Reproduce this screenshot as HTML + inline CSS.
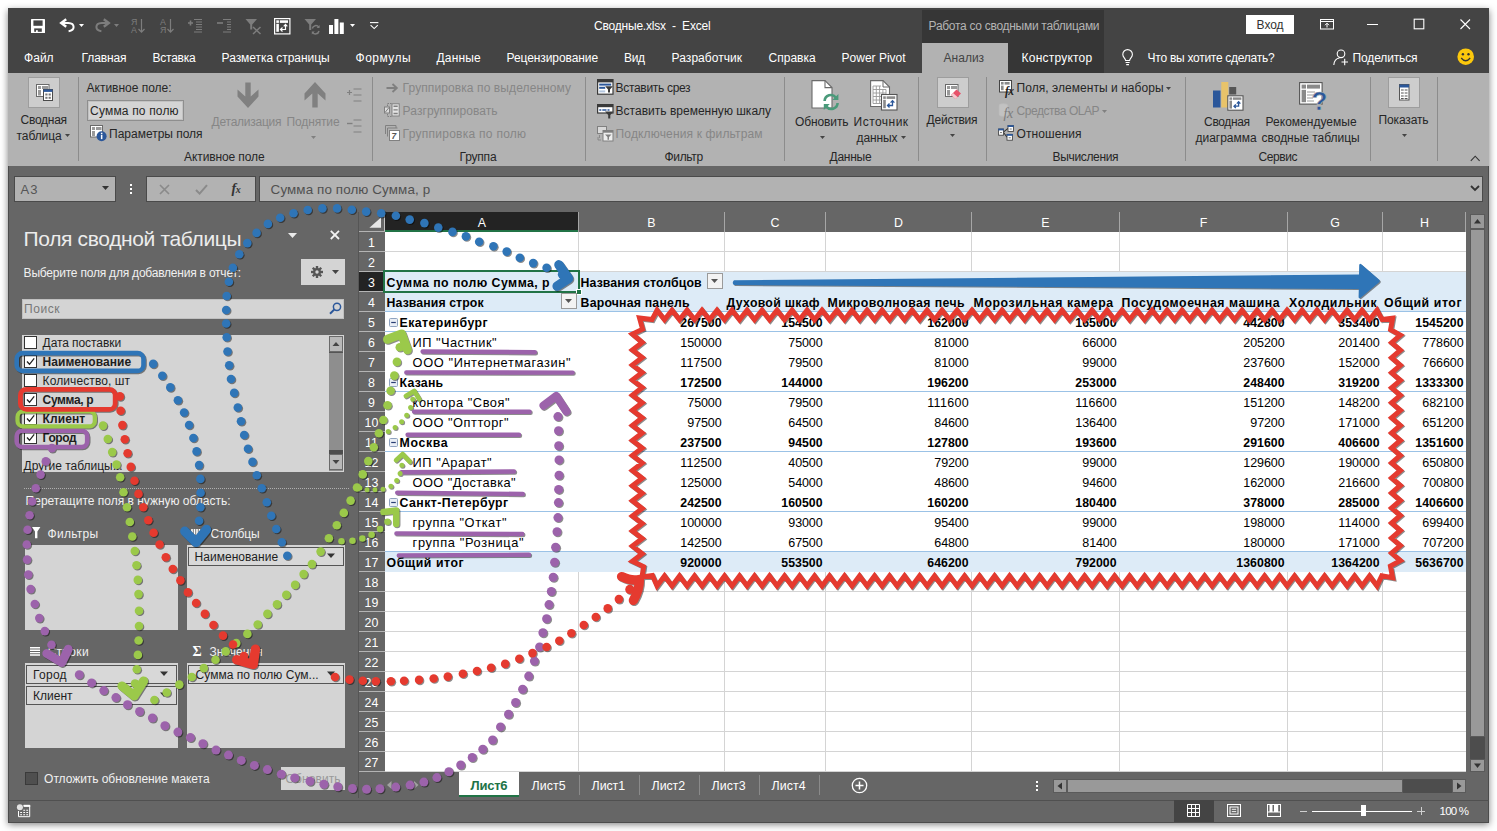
<!DOCTYPE html>
<html><head><meta charset="utf-8"><title>Excel</title>
<style>
html,body{margin:0;padding:0;background:#fff;}
body{width:1497px;height:831px;position:relative;overflow:hidden;font-family:"Liberation Sans",sans-serif;}
.a{position:absolute;box-sizing:border-box;}
.t{position:absolute;white-space:pre;}
svg{position:absolute;overflow:visible;}
</style></head><body>
<div class="a" style="left:8px;top:8px;width:1481px;height:815px;background:#666666;border:1px solid #4c4c4c;box-shadow:0 1.5px 7px rgba(0,0,0,.5);"></div>
<div class="a" style="left:8px;top:8px;width:1481px;height:65px;background:#444444;"></div>
<div class="a" style="left:922px;top:10px;width:182px;height:63px;background:#363636;"></div>
<span class="t " style="top:18.00px;font-size:12px;line-height:16px;color:#b4b4b4;letter-spacing:-0.291px;left:928.60px;">Работа со сводными таблицами</span>
<div class="a" style="left:922px;top:43px;width:86px;height:30px;background:#b2b2b2;"></div>
<span class="t " style="top:18.00px;font-size:12px;line-height:16px;color:#ffffff;letter-spacing:-0.211px;left:594.10px;">Сводные.xlsx  -  Excel</span>
<div class="a" style="left:1246px;top:15px;width:48px;height:19px;background:#ffffff;"></div>
<span class="t " style="top:17.00px;font-size:12px;line-height:16px;color:#333333;letter-spacing:-0.052px;left:1256.60px;">Вход</span>
<span class="t " style="top:50.00px;font-size:12px;line-height:16px;color:#ffffff;letter-spacing:-0.005px;left:24.10px;">Файл</span>
<span class="t " style="top:50.00px;font-size:12px;line-height:16px;color:#ffffff;letter-spacing:-0.115px;left:81.60px;">Главная</span>
<span class="t " style="top:50.00px;font-size:12px;line-height:16px;color:#ffffff;letter-spacing:-0.268px;left:152.60px;">Вставка</span>
<span class="t " style="top:50.00px;font-size:12px;line-height:16px;color:#ffffff;letter-spacing:-0.055px;left:221.60px;">Разметка страницы</span>
<span class="t " style="top:50.00px;font-size:12px;line-height:16px;color:#ffffff;letter-spacing:0.464px;left:355.60px;">Формулы</span>
<span class="t " style="top:50.00px;font-size:12px;line-height:16px;color:#ffffff;letter-spacing:0.128px;left:436.60px;">Данные</span>
<span class="t " style="top:50.00px;font-size:12px;line-height:16px;color:#ffffff;letter-spacing:-0.090px;left:506.60px;">Рецензирование</span>
<span class="t " style="top:50.00px;font-size:12px;line-height:16px;color:#ffffff;letter-spacing:-0.359px;left:624.10px;">Вид</span>
<span class="t " style="top:50.00px;font-size:12px;line-height:16px;color:#ffffff;letter-spacing:0.052px;left:671.60px;">Разработчик</span>
<span class="t " style="top:50.00px;font-size:12px;line-height:16px;color:#ffffff;letter-spacing:-0.013px;left:768.60px;">Справка</span>
<span class="t " style="top:50.00px;font-size:12px;line-height:16px;color:#ffffff;letter-spacing:-0.003px;left:841.60px;">Power Pivot</span>
<span class="t " style="top:50.00px;font-size:12px;line-height:16px;color:#ffffff;letter-spacing:0.208px;left:1021.60px;">Конструктор</span>
<span class="t " style="top:50.00px;font-size:12px;line-height:16px;color:#ffffff;letter-spacing:-0.269px;left:1147.60px;">Что вы хотите сделать?</span>
<span class="t " style="top:50.00px;font-size:12px;line-height:16px;color:#ffffff;letter-spacing:-0.141px;left:1352.60px;">Поделиться</span>
<span class="t " style="top:50.00px;font-size:12px;line-height:16px;color:#444444;letter-spacing:-0.003px;left:943.60px;">Анализ</span>
<div class="a" style="left:8px;top:73px;width:1481px;height:93px;background:#b2b2b2;"></div>
<div class="a" style="left:78px;top:77px;width:1px;height:84px;background:#8c8c8c;"></div>
<div class="a" style="left:372px;top:77px;width:1px;height:84px;background:#8c8c8c;"></div>
<div class="a" style="left:585px;top:77px;width:1px;height:84px;background:#8c8c8c;"></div>
<div class="a" style="left:784px;top:77px;width:1px;height:84px;background:#8c8c8c;"></div>
<div class="a" style="left:918px;top:77px;width:1px;height:84px;background:#8c8c8c;"></div>
<div class="a" style="left:986px;top:77px;width:1px;height:84px;background:#8c8c8c;"></div>
<div class="a" style="left:1185px;top:77px;width:1px;height:84px;background:#8c8c8c;"></div>
<div class="a" style="left:1370px;top:77px;width:1px;height:84px;background:#8c8c8c;"></div>
<div class="a" style="left:1437px;top:77px;width:1px;height:84px;background:#8c8c8c;"></div>
<div class="a" style="left:28px;top:77px;width:32px;height:31px;background:#cdcdcd;border:1px solid #9d9d9d;"></div>
<span class="t " style="top:112.00px;font-size:12px;line-height:16px;color:#262626;letter-spacing:-0.271px;left:20.60px;">Сводная</span>
<span class="t " style="top:128.00px;font-size:12px;line-height:16px;color:#262626;letter-spacing:-0.104px;left:16.60px;">таблица</span>
<span class="t " style="top:80.00px;font-size:12px;line-height:16px;color:#262626;letter-spacing:-0.016px;left:86.60px;">Активное поле:</span>
<div class="a" style="left:87px;top:100px;width:97px;height:21px;background:#d4d4d4;border:1px solid #8e8e8e;box-shadow:inset 0 0 0 1px #c2c2c2;"></div>
<span class="t " style="top:103.00px;font-size:12px;line-height:16px;color:#262626;letter-spacing:0.169px;left:90.10px;">Сумма по полю</span>
<span class="t " style="top:126.00px;font-size:12px;line-height:16px;color:#262626;letter-spacing:-0.017px;left:109.10px;">Параметры поля</span>
<span class="t " style="top:114.00px;font-size:12px;line-height:16px;color:#868686;letter-spacing:-0.241px;left:211.60px;">Детализация</span>
<span class="t " style="top:114.00px;font-size:12px;line-height:16px;color:#868686;letter-spacing:-0.150px;left:286.60px;">Поднятие</span>
<span class="t " style="top:149.00px;font-size:12px;line-height:16px;color:#262626;letter-spacing:-0.113px;left:184.10px;">Активное поле</span>
<span class="t " style="top:80.00px;font-size:12px;line-height:16px;color:#868686;letter-spacing:0.097px;left:402.60px;">Группировка по выделенному</span>
<span class="t " style="top:103.00px;font-size:12px;line-height:16px;color:#868686;letter-spacing:0.070px;left:402.60px;">Разгруппировать</span>
<span class="t " style="top:126.00px;font-size:12px;line-height:16px;color:#868686;letter-spacing:0.265px;left:402.60px;">Группировка по полю</span>
<span class="t " style="top:149.00px;font-size:12px;line-height:16px;color:#262626;letter-spacing:-0.209px;left:459.60px;">Группа</span>
<span class="t " style="top:80.00px;font-size:12px;line-height:16px;color:#262626;letter-spacing:-0.316px;left:615.60px;">Вставить срез</span>
<span class="t " style="top:103.00px;font-size:12px;line-height:16px;color:#262626;letter-spacing:0.011px;left:615.60px;">Вставить временную шкалу</span>
<span class="t " style="top:126.00px;font-size:12px;line-height:16px;color:#868686;letter-spacing:0.151px;left:615.60px;">Подключения к фильтрам</span>
<span class="t " style="top:149.00px;font-size:12px;line-height:16px;color:#262626;letter-spacing:-0.362px;left:664.60px;">Фильтр</span>
<span class="t " style="top:114.00px;font-size:12px;line-height:16px;color:#262626;letter-spacing:-0.121px;left:795.10px;">Обновить</span>
<span class="t " style="top:114.00px;font-size:12px;line-height:16px;color:#262626;letter-spacing:0.467px;left:853.60px;">Источник</span>
<span class="t " style="top:130.00px;font-size:12px;line-height:16px;color:#262626;letter-spacing:-0.113px;left:856.60px;">данных</span>
<span class="t " style="top:149.00px;font-size:12px;line-height:16px;color:#262626;letter-spacing:-0.272px;left:829.60px;">Данные</span>
<div class="a" style="left:937px;top:77px;width:32px;height:31px;background:#cdcdcd;border:1px solid #9d9d9d;"></div>
<span class="t " style="top:112.00px;font-size:12px;line-height:16px;color:#262626;letter-spacing:-0.225px;left:926.60px;">Действия</span>
<span class="t " style="top:80.00px;font-size:12px;line-height:16px;color:#262626;letter-spacing:0.048px;left:1016.60px;">Поля, элементы и наборы</span>
<span class="t " style="top:103.00px;font-size:12px;line-height:16px;color:#868686;letter-spacing:-0.460px;left:1016.60px;">Средства OLAP</span>
<span class="t " style="top:126.00px;font-size:12px;line-height:16px;color:#262626;letter-spacing:0.092px;left:1016.60px;">Отношения</span>
<span class="t " style="top:149.00px;font-size:12px;line-height:16px;color:#262626;letter-spacing:-0.344px;left:1052.60px;">Вычисления</span>
<span class="t " style="top:114.00px;font-size:12px;line-height:16px;color:#262626;letter-spacing:-0.354px;left:1204.10px;">Сводная</span>
<span class="t " style="top:130.00px;font-size:12px;line-height:16px;color:#262626;letter-spacing:-0.035px;left:1195.60px;">диаграмма</span>
<span class="t " style="top:114.00px;font-size:12px;line-height:16px;color:#262626;letter-spacing:0.012px;left:1265.60px;">Рекомендуемые</span>
<span class="t " style="top:130.00px;font-size:12px;line-height:16px;color:#262626;letter-spacing:-0.035px;left:1261.60px;">сводные таблицы</span>
<span class="t " style="top:149.00px;font-size:12px;line-height:16px;color:#262626;letter-spacing:-0.419px;left:1258.60px;">Сервис</span>
<div class="a" style="left:1388px;top:77px;width:32px;height:31px;background:#cdcdcd;border:1px solid #9d9d9d;"></div>
<span class="t " style="top:112.00px;font-size:12px;line-height:16px;color:#262626;letter-spacing:-0.145px;left:1378.60px;">Показать</span>
<div class="a" style="left:14px;top:176px;width:102px;height:26px;background:#b2b2b2;border:1px solid #4a4a4a;"></div>
<span class="t " style="top:181.00px;font-size:13px;line-height:17px;color:#555555;letter-spacing:1.094px;left:20.60px;">A3</span>
<div class="a" style="left:146px;top:176px;width:110px;height:26px;background:#b2b2b2;border:1px solid #4a4a4a;"></div>
<div class="a" style="left:259px;top:176px;width:1224px;height:26px;background:#b2b2b2;border:1px solid #4a4a4a;"></div>
<span class="t " style="top:181.00px;font-size:13.4px;line-height:17px;color:#505050;letter-spacing:0.111px;left:270.60px;">Сумма по полю Сумма, р</span>
<span class="t " style="top:226.00px;font-size:21px;line-height:25px;color:#ececec;letter-spacing:-0.356px;left:23.60px;">Поля сводной таблицы</span>
<span class="t " style="top:265.00px;font-size:12px;line-height:16px;color:#f0f0f0;letter-spacing:-0.215px;left:23.60px;">Выберите поля для добавления в отчет:</span>
<div class="a" style="left:301px;top:259px;width:44px;height:26px;background:#d4d4d4;"></div>
<div class="a" style="left:22px;top:299px;width:322px;height:20px;background:#d4d4d4;border:1px solid #c0c0c0;"></div>
<span class="t " style="top:301.00px;font-size:12px;line-height:16px;color:#777777;letter-spacing:0.559px;left:24.10px;">Поиск</span>
<div class="a" style="left:22px;top:335px;width:322px;height:137px;background:#d4d4d4;"></div>
<div class="a" style="left:24px;top:336.0px;width:13px;height:13px;background:#ffffff;border:1px solid #333333;"></div>
<span class="t " style="top:335.00px;font-size:12px;line-height:16px;color:#1e1e1e;letter-spacing:-0.079px;left:42.60px;">Дата поставки</span>
<div class="a" style="left:24px;top:355.0px;width:13px;height:13px;background:#ffffff;border:1px solid #333333;"></div>
<svg style="left:24px;top:355.0px" width="13" height="13"><path d="M3 6.5 L5.5 9.3 L10.2 3.3" fill="none" stroke="#222" stroke-width="1.3"/></svg>
<span class="t " style="top:354.00px;font-size:12px;line-height:16px;color:#1e1e1e;font-weight:bold;letter-spacing:0.041px;left:42.60px;">Наименование</span>
<div class="a" style="left:24px;top:374.0px;width:13px;height:13px;background:#ffffff;border:1px solid #333333;"></div>
<span class="t " style="top:373.00px;font-size:12px;line-height:16px;color:#1e1e1e;letter-spacing:0.097px;left:42.60px;">Количество, шт</span>
<div class="a" style="left:24px;top:393.0px;width:13px;height:13px;background:#ffffff;border:1px solid #333333;"></div>
<svg style="left:24px;top:393.0px" width="13" height="13"><path d="M3 6.5 L5.5 9.3 L10.2 3.3" fill="none" stroke="#222" stroke-width="1.3"/></svg>
<span class="t " style="top:392.00px;font-size:12px;line-height:16px;color:#1e1e1e;font-weight:bold;letter-spacing:-0.350px;left:42.60px;">Сумма, р</span>
<div class="a" style="left:24px;top:412.0px;width:13px;height:13px;background:#ffffff;border:1px solid #333333;"></div>
<svg style="left:24px;top:412.0px" width="13" height="13"><path d="M3 6.5 L5.5 9.3 L10.2 3.3" fill="none" stroke="#222" stroke-width="1.3"/></svg>
<span class="t " style="top:411.00px;font-size:12px;line-height:16px;color:#1e1e1e;font-weight:bold;letter-spacing:0.075px;left:42.60px;">Клиент</span>
<div class="a" style="left:24px;top:431.0px;width:13px;height:13px;background:#ffffff;border:1px solid #333333;"></div>
<svg style="left:24px;top:431.0px" width="13" height="13"><path d="M3 6.5 L5.5 9.3 L10.2 3.3" fill="none" stroke="#222" stroke-width="1.3"/></svg>
<span class="t " style="top:430.00px;font-size:12px;line-height:16px;color:#1e1e1e;font-weight:bold;letter-spacing:-0.414px;left:42.60px;">Город</span>
<span class="t " style="top:458.00px;font-size:12px;line-height:16px;color:#1e1e1e;letter-spacing:-0.021px;left:23.60px;">Другие таблицы...</span>
<div class="a" style="left:329px;top:336px;width:14px;height:135px;background:#8e8e8e;"></div>
<div class="a" style="left:329px;top:336px;width:14px;height:16px;background:#b8b8b8;border:1px solid #6a6a6a;"></div>
<div class="a" style="left:329px;top:454px;width:14px;height:16px;background:#b8b8b8;border:1px solid #6a6a6a;"></div>
<div class="a" style="left:329px;top:352px;width:14px;height:1px;background:#555;"></div>
<div class="a" style="left:329px;top:450px;width:14px;height:4px;background:#4d4d4d;"></div>
<svg style="left:329px;top:336px" width="14" height="16"><path d="M3.5 10 L7 6 L10.5 10 Z" fill="#444"/></svg>
<svg style="left:329px;top:454px" width="14" height="16"><path d="M3.5 6 L7 10 L10.5 6 Z" fill="#444"/></svg>
<div class="a" style="left:24px;top:488px;width:325px;height:0px;border-top:1px dotted #b0b0b0;"></div>
<span class="t " style="top:493.00px;font-size:12px;line-height:16px;color:#f0f0f0;letter-spacing:-0.006px;left:25.60px;">Перетащите поля в нужную область:</span>
<span class="t " style="top:526.00px;font-size:12px;line-height:16px;color:#f0f0f0;letter-spacing:0.260px;left:47.60px;">Фильтры</span>
<span class="t " style="top:526.00px;font-size:12px;line-height:16px;color:#f0f0f0;letter-spacing:-0.135px;left:210.60px;">Столбцы</span>
<span class="t " style="top:644.00px;font-size:12px;line-height:16px;color:#f0f0f0;letter-spacing:0.306px;left:47.60px;">Строки</span>
<span class="t " style="top:644.00px;font-size:12px;line-height:16px;color:#f0f0f0;letter-spacing:-0.007px;left:209.60px;">Значения</span>
<div class="a" style="left:25px;top:545px;width:153px;height:85px;background:#d4d4d4;"></div>
<div class="a" style="left:187px;top:545px;width:158px;height:85px;background:#d4d4d4;"></div>
<div class="a" style="left:25px;top:663px;width:153px;height:85px;background:#d4d4d4;"></div>
<div class="a" style="left:187px;top:663px;width:158px;height:85px;background:#d4d4d4;"></div>
<div class="a" style="left:188px;top:547px;width:156px;height:19px;background:#d8d8d8;border:1px solid #555555;"></div>
<span class="t " style="top:549.00px;font-size:12px;line-height:16px;color:#1e1e1e;letter-spacing:0.028px;left:194.60px;">Наименование</span>
<svg style="left:327px;top:553px" width="9" height="6"><path d="M0 0.5 H8 L4 5 Z" fill="#333"/></svg>
<div class="a" style="left:26px;top:665px;width:151px;height:19px;background:#d8d8d8;border:1px solid #555555;"></div>
<span class="t " style="top:667.00px;font-size:12px;line-height:16px;color:#1e1e1e;letter-spacing:0.258px;left:33.10px;">Город</span>
<svg style="left:160px;top:671px" width="9" height="6"><path d="M0 0.5 H8 L4 5 Z" fill="#333"/></svg>
<div class="a" style="left:26px;top:686px;width:151px;height:19px;background:#d8d8d8;border:1px solid #555555;"></div>
<span class="t " style="top:688.00px;font-size:12px;line-height:16px;color:#1e1e1e;letter-spacing:0.000px;left:33.10px;">Клиент</span>
<svg style="left:160px;top:692px" width="9" height="6"><path d="M0 0.5 H8 L4 5 Z" fill="#333"/></svg>
<div class="a" style="left:188px;top:665px;width:156px;height:19px;background:#d8d8d8;border:1px solid #555555;"></div>
<span class="t " style="top:667.00px;font-size:12px;line-height:16px;color:#1e1e1e;letter-spacing:0.022px;left:195.60px;">Сумма по полю Сум...</span>
<svg style="left:327px;top:671px" width="9" height="6"><path d="M0 0.5 H8 L4 5 Z" fill="#333"/></svg>
<div class="a" style="left:25px;top:772px;width:13px;height:13px;background:#4f4f4f;border:1px solid #3a3a3a;"></div>
<span class="t " style="top:771.00px;font-size:12px;line-height:16px;color:#f0f0f0;letter-spacing:-0.046px;left:44.10px;">Отложить обновление макета</span>
<div class="a" style="left:281px;top:767px;width:64px;height:23px;background:#d4d4d4;"></div>
<span class="t " style="top:771.00px;font-size:12px;line-height:16px;color:#9a9a9a;letter-spacing:0.094px;left:285.60px;">Обновить</span>
<div class="a" style="left:358px;top:212px;width:1px;height:586px;background:#555555;"></div>
<div class="a" style="left:385px;top:232px;width:1081px;height:540px;background:#ffffff;"></div>
<div class="a" style="left:385px;top:251px;width:1081px;height:1px;background:#d4d4d4;"></div>
<div class="a" style="left:385px;top:271px;width:1081px;height:1px;background:#d4d4d4;"></div>
<div class="a" style="left:385px;top:591px;width:1081px;height:1px;background:#d4d4d4;"></div>
<div class="a" style="left:385px;top:611px;width:1081px;height:1px;background:#d4d4d4;"></div>
<div class="a" style="left:385px;top:631px;width:1081px;height:1px;background:#d4d4d4;"></div>
<div class="a" style="left:385px;top:651px;width:1081px;height:1px;background:#d4d4d4;"></div>
<div class="a" style="left:385px;top:671px;width:1081px;height:1px;background:#d4d4d4;"></div>
<div class="a" style="left:385px;top:691px;width:1081px;height:1px;background:#d4d4d4;"></div>
<div class="a" style="left:385px;top:711px;width:1081px;height:1px;background:#d4d4d4;"></div>
<div class="a" style="left:385px;top:731px;width:1081px;height:1px;background:#d4d4d4;"></div>
<div class="a" style="left:385px;top:751px;width:1081px;height:1px;background:#d4d4d4;"></div>
<div class="a" style="left:385px;top:771px;width:1081px;height:1px;background:#d4d4d4;"></div>
<div class="a" style="left:578px;top:232px;width:1px;height:40px;background:#d4d4d4;"></div>
<div class="a" style="left:578px;top:572px;width:1px;height:200px;background:#d4d4d4;"></div>
<div class="a" style="left:724px;top:232px;width:1px;height:40px;background:#d4d4d4;"></div>
<div class="a" style="left:724px;top:572px;width:1px;height:200px;background:#d4d4d4;"></div>
<div class="a" style="left:825px;top:232px;width:1px;height:40px;background:#d4d4d4;"></div>
<div class="a" style="left:825px;top:572px;width:1px;height:200px;background:#d4d4d4;"></div>
<div class="a" style="left:971px;top:232px;width:1px;height:40px;background:#d4d4d4;"></div>
<div class="a" style="left:971px;top:572px;width:1px;height:200px;background:#d4d4d4;"></div>
<div class="a" style="left:1119px;top:232px;width:1px;height:40px;background:#d4d4d4;"></div>
<div class="a" style="left:1119px;top:572px;width:1px;height:200px;background:#d4d4d4;"></div>
<div class="a" style="left:1287px;top:232px;width:1px;height:40px;background:#d4d4d4;"></div>
<div class="a" style="left:1287px;top:572px;width:1px;height:200px;background:#d4d4d4;"></div>
<div class="a" style="left:1382px;top:232px;width:1px;height:40px;background:#d4d4d4;"></div>
<div class="a" style="left:1382px;top:572px;width:1px;height:200px;background:#d4d4d4;"></div>
<div class="a" style="left:385px;top:272px;width:1081px;height:39px;background:#ddebf7;"></div>
<div class="a" style="left:385px;top:552px;width:1081px;height:20px;background:#ddebf7;"></div>
<div class="a" style="left:385px;top:311px;width:1081px;height:1px;background:#9bc2e6;"></div>
<div class="a" style="left:385px;top:331px;width:1081px;height:1px;background:#9bc2e6;"></div>
<div class="a" style="left:385px;top:391px;width:1081px;height:1px;background:#9bc2e6;"></div>
<div class="a" style="left:385px;top:451px;width:1081px;height:1px;background:#9bc2e6;"></div>
<div class="a" style="left:385px;top:511px;width:1081px;height:1px;background:#9bc2e6;"></div>
<div class="a" style="left:385px;top:551px;width:1081px;height:1px;background:#9bc2e6;"></div>
<div class="a" style="left:359px;top:212px;width:1107px;height:20px;background:#666666;"></div>
<div class="a" style="left:385px;top:212px;width:194px;height:20px;background:#232323;border-bottom:2px solid #217346;"></div>
<div class="a" style="left:578px;top:212px;width:1px;height:20px;background:#a6a6a6;"></div>
<span class="t " style="top:215.00px;font-size:12.4px;line-height:16px;color:#ffffff;left:432.00px;width:100px;text-align:center;">A</span>
<div class="a" style="left:724px;top:212px;width:1px;height:20px;background:#a6a6a6;"></div>
<span class="t " style="top:215.00px;font-size:12.4px;line-height:16px;color:#ffffff;left:601.50px;width:100px;text-align:center;">B</span>
<div class="a" style="left:825px;top:212px;width:1px;height:20px;background:#a6a6a6;"></div>
<span class="t " style="top:215.00px;font-size:12.4px;line-height:16px;color:#ffffff;left:725.00px;width:100px;text-align:center;">C</span>
<div class="a" style="left:971px;top:212px;width:1px;height:20px;background:#a6a6a6;"></div>
<span class="t " style="top:215.00px;font-size:12.4px;line-height:16px;color:#ffffff;left:848.50px;width:100px;text-align:center;">D</span>
<div class="a" style="left:1119px;top:212px;width:1px;height:20px;background:#a6a6a6;"></div>
<span class="t " style="top:215.00px;font-size:12.4px;line-height:16px;color:#ffffff;left:995.50px;width:100px;text-align:center;">E</span>
<div class="a" style="left:1287px;top:212px;width:1px;height:20px;background:#a6a6a6;"></div>
<span class="t " style="top:215.00px;font-size:12.4px;line-height:16px;color:#ffffff;left:1153.50px;width:100px;text-align:center;">F</span>
<div class="a" style="left:1382px;top:212px;width:1px;height:20px;background:#a6a6a6;"></div>
<span class="t " style="top:215.00px;font-size:12.4px;line-height:16px;color:#ffffff;left:1285.00px;width:100px;text-align:center;">G</span>
<div class="a" style="left:1465px;top:212px;width:1px;height:20px;background:#a6a6a6;"></div>
<span class="t " style="top:215.00px;font-size:12.4px;line-height:16px;color:#ffffff;left:1374.50px;width:100px;text-align:center;">H</span>
<div class="a" style="left:384px;top:213px;width:1px;height:18px;background:#c4c4c4;"></div>
<svg style="left:359px;top:212px" width="26" height="19"><path d="M22 5.6 V15.8 H10.4 Z" fill="#e6e6e6"/></svg>
<div class="a" style="left:359px;top:232px;width:26px;height:20px;background:#666666;border-bottom:1px solid #b4b4b4;"></div>
<span class="t " style="top:235.00px;font-size:12.4px;line-height:16px;color:#ffffff;left:321.50px;width:100px;text-align:center;">1</span>
<div class="a" style="left:359px;top:252px;width:26px;height:20px;background:#666666;border-bottom:1px solid #b4b4b4;"></div>
<span class="t " style="top:255.00px;font-size:12.4px;line-height:16px;color:#ffffff;left:321.50px;width:100px;text-align:center;">2</span>
<div class="a" style="left:359px;top:272px;width:26px;height:20px;background:#232323;border-bottom:1px solid #b4b4b4;"></div>
<span class="t " style="top:275.00px;font-size:12.4px;line-height:16px;color:#ffffff;left:321.50px;width:100px;text-align:center;">3</span>
<div class="a" style="left:359px;top:292px;width:26px;height:20px;background:#666666;border-bottom:1px solid #b4b4b4;"></div>
<span class="t " style="top:295.00px;font-size:12.4px;line-height:16px;color:#ffffff;left:321.50px;width:100px;text-align:center;">4</span>
<div class="a" style="left:359px;top:312px;width:26px;height:20px;background:#666666;border-bottom:1px solid #b4b4b4;"></div>
<span class="t " style="top:315.00px;font-size:12.4px;line-height:16px;color:#ffffff;left:321.50px;width:100px;text-align:center;">5</span>
<div class="a" style="left:359px;top:332px;width:26px;height:20px;background:#666666;border-bottom:1px solid #b4b4b4;"></div>
<span class="t " style="top:335.00px;font-size:12.4px;line-height:16px;color:#ffffff;left:321.50px;width:100px;text-align:center;">6</span>
<div class="a" style="left:359px;top:352px;width:26px;height:20px;background:#666666;border-bottom:1px solid #b4b4b4;"></div>
<span class="t " style="top:355.00px;font-size:12.4px;line-height:16px;color:#ffffff;left:321.50px;width:100px;text-align:center;">7</span>
<div class="a" style="left:359px;top:372px;width:26px;height:20px;background:#666666;border-bottom:1px solid #b4b4b4;"></div>
<span class="t " style="top:375.00px;font-size:12.4px;line-height:16px;color:#ffffff;left:321.50px;width:100px;text-align:center;">8</span>
<div class="a" style="left:359px;top:392px;width:26px;height:20px;background:#666666;border-bottom:1px solid #b4b4b4;"></div>
<span class="t " style="top:395.00px;font-size:12.4px;line-height:16px;color:#ffffff;left:321.50px;width:100px;text-align:center;">9</span>
<div class="a" style="left:359px;top:412px;width:26px;height:20px;background:#666666;border-bottom:1px solid #b4b4b4;"></div>
<span class="t " style="top:415.00px;font-size:12.4px;line-height:16px;color:#ffffff;left:321.50px;width:100px;text-align:center;">10</span>
<div class="a" style="left:359px;top:432px;width:26px;height:20px;background:#666666;border-bottom:1px solid #b4b4b4;"></div>
<span class="t " style="top:435.00px;font-size:12.4px;line-height:16px;color:#ffffff;left:321.50px;width:100px;text-align:center;">11</span>
<div class="a" style="left:359px;top:452px;width:26px;height:20px;background:#666666;border-bottom:1px solid #b4b4b4;"></div>
<span class="t " style="top:455.00px;font-size:12.4px;line-height:16px;color:#ffffff;left:321.50px;width:100px;text-align:center;">12</span>
<div class="a" style="left:359px;top:472px;width:26px;height:20px;background:#666666;border-bottom:1px solid #b4b4b4;"></div>
<span class="t " style="top:475.00px;font-size:12.4px;line-height:16px;color:#ffffff;left:321.50px;width:100px;text-align:center;">13</span>
<div class="a" style="left:359px;top:492px;width:26px;height:20px;background:#666666;border-bottom:1px solid #b4b4b4;"></div>
<span class="t " style="top:495.00px;font-size:12.4px;line-height:16px;color:#ffffff;left:321.50px;width:100px;text-align:center;">14</span>
<div class="a" style="left:359px;top:512px;width:26px;height:20px;background:#666666;border-bottom:1px solid #b4b4b4;"></div>
<span class="t " style="top:515.00px;font-size:12.4px;line-height:16px;color:#ffffff;left:321.50px;width:100px;text-align:center;">15</span>
<div class="a" style="left:359px;top:532px;width:26px;height:20px;background:#666666;border-bottom:1px solid #b4b4b4;"></div>
<span class="t " style="top:535.00px;font-size:12.4px;line-height:16px;color:#ffffff;left:321.50px;width:100px;text-align:center;">16</span>
<div class="a" style="left:359px;top:552px;width:26px;height:20px;background:#666666;border-bottom:1px solid #b4b4b4;"></div>
<span class="t " style="top:555.00px;font-size:12.4px;line-height:16px;color:#ffffff;left:321.50px;width:100px;text-align:center;">17</span>
<div class="a" style="left:359px;top:572px;width:26px;height:20px;background:#666666;border-bottom:1px solid #b4b4b4;"></div>
<span class="t " style="top:575.00px;font-size:12.4px;line-height:16px;color:#ffffff;left:321.50px;width:100px;text-align:center;">18</span>
<div class="a" style="left:359px;top:592px;width:26px;height:20px;background:#666666;border-bottom:1px solid #b4b4b4;"></div>
<span class="t " style="top:595.00px;font-size:12.4px;line-height:16px;color:#ffffff;left:321.50px;width:100px;text-align:center;">19</span>
<div class="a" style="left:359px;top:612px;width:26px;height:20px;background:#666666;border-bottom:1px solid #b4b4b4;"></div>
<span class="t " style="top:615.00px;font-size:12.4px;line-height:16px;color:#ffffff;left:321.50px;width:100px;text-align:center;">20</span>
<div class="a" style="left:359px;top:632px;width:26px;height:20px;background:#666666;border-bottom:1px solid #b4b4b4;"></div>
<span class="t " style="top:635.00px;font-size:12.4px;line-height:16px;color:#ffffff;left:321.50px;width:100px;text-align:center;">21</span>
<div class="a" style="left:359px;top:652px;width:26px;height:20px;background:#666666;border-bottom:1px solid #b4b4b4;"></div>
<span class="t " style="top:655.00px;font-size:12.4px;line-height:16px;color:#ffffff;left:321.50px;width:100px;text-align:center;">22</span>
<div class="a" style="left:359px;top:672px;width:26px;height:20px;background:#666666;border-bottom:1px solid #b4b4b4;"></div>
<span class="t " style="top:675.00px;font-size:12.4px;line-height:16px;color:#ffffff;left:321.50px;width:100px;text-align:center;">23</span>
<div class="a" style="left:359px;top:692px;width:26px;height:20px;background:#666666;border-bottom:1px solid #b4b4b4;"></div>
<span class="t " style="top:695.00px;font-size:12.4px;line-height:16px;color:#ffffff;left:321.50px;width:100px;text-align:center;">24</span>
<div class="a" style="left:359px;top:712px;width:26px;height:20px;background:#666666;border-bottom:1px solid #b4b4b4;"></div>
<span class="t " style="top:715.00px;font-size:12.4px;line-height:16px;color:#ffffff;left:321.50px;width:100px;text-align:center;">25</span>
<div class="a" style="left:359px;top:732px;width:26px;height:20px;background:#666666;border-bottom:1px solid #b4b4b4;"></div>
<span class="t " style="top:735.00px;font-size:12.4px;line-height:16px;color:#ffffff;left:321.50px;width:100px;text-align:center;">26</span>
<div class="a" style="left:359px;top:752px;width:26px;height:20px;background:#666666;border-bottom:1px solid #b4b4b4;"></div>
<span class="t " style="top:755.00px;font-size:12.4px;line-height:16px;color:#ffffff;left:321.50px;width:100px;text-align:center;">27</span>
<div class="a" style="left:359px;top:231px;width:26px;height:1px;background:#b4b4b4;"></div>
<div class="a" style="left:383px;top:270px;width:197px;height:23px;border:2px solid #217346;"></div>
<div class="a" style="left:575.5px;top:288.5px;width:6px;height:6px;background:#217346;border:1px solid #fff;"></div>
<span class="t " style="top:275.00px;font-size:12.3px;line-height:16px;color:#000000;font-weight:bold;letter-spacing:0.460px;left:386.60px;">Сумма по полю Сумма, р</span>
<span class="t " style="top:275.00px;font-size:12.3px;line-height:16px;color:#000000;font-weight:bold;letter-spacing:0.089px;left:580.60px;">Названия столбцов</span>
<span class="t " style="top:295.00px;font-size:12.3px;line-height:16px;color:#000000;font-weight:bold;letter-spacing:0.089px;left:386.60px;">Названия строк</span>
<span class="t " style="top:295.00px;font-size:12.3px;line-height:16px;color:#000000;font-weight:bold;letter-spacing:0.190px;left:580.60px;">Варочная панель</span>
<span class="t " style="top:295.00px;font-size:12.3px;line-height:16px;color:#000000;font-weight:bold;letter-spacing:0.287px;left:726.60px;">Духовой шкаф</span>
<span class="t " style="top:295.00px;font-size:12.3px;line-height:16px;color:#000000;font-weight:bold;letter-spacing:0.422px;left:827.60px;">Микроволновая печь</span>
<span class="t " style="top:295.00px;font-size:12.3px;line-height:16px;color:#000000;font-weight:bold;letter-spacing:0.571px;left:973.60px;">Морозильная камера</span>
<span class="t " style="top:295.00px;font-size:12.3px;line-height:16px;color:#000000;font-weight:bold;letter-spacing:0.550px;left:1121.60px;">Посудомоечная машина</span>
<span class="t " style="top:295.00px;font-size:12.3px;line-height:16px;color:#000000;font-weight:bold;letter-spacing:0.537px;left:1289.10px;">Холодильник</span>
<span class="t " style="top:295.00px;font-size:12.3px;line-height:16px;color:#000000;font-weight:bold;letter-spacing:0.597px;left:1384.10px;">Общий итог</span>
<span class="t " style="top:315.00px;font-size:12.3px;line-height:16px;color:#000000;font-weight:bold;letter-spacing:0.426px;left:399.60px;">Екатеринбург</span>
<svg style="left:389px;top:318px" width="9" height="9"><rect x="0.5" y="0.5" width="8" height="8" rx="1" fill="#e9eef5" stroke="#8fa3bf"/><path d="M2.2 4.5 H6.8" stroke="#2a3f73" stroke-width="1.2"/></svg>
<span class="t " style="top:334.00px;font-size:12.8px;line-height:17px;color:#000000;letter-spacing:0.476px;left:412.60px;">ИП "Частник"</span>
<span class="t " style="top:354.00px;font-size:12.8px;line-height:17px;color:#000000;letter-spacing:0.615px;left:412.60px;">ООО "Интернетмагазин"</span>
<span class="t " style="top:375.00px;font-size:12.3px;line-height:16px;color:#000000;font-weight:bold;letter-spacing:0.216px;left:399.60px;">Казань</span>
<svg style="left:389px;top:378px" width="9" height="9"><rect x="0.5" y="0.5" width="8" height="8" rx="1" fill="#e9eef5" stroke="#8fa3bf"/><path d="M2.2 4.5 H6.8" stroke="#2a3f73" stroke-width="1.2"/></svg>
<span class="t " style="top:394.00px;font-size:12.8px;line-height:17px;color:#000000;letter-spacing:0.570px;left:412.60px;">контора "Своя"</span>
<span class="t " style="top:414.00px;font-size:12.8px;line-height:17px;color:#000000;letter-spacing:0.510px;left:412.60px;">ООО "Оптторг"</span>
<span class="t " style="top:435.00px;font-size:12.3px;line-height:16px;color:#000000;font-weight:bold;letter-spacing:0.634px;left:399.60px;">Москва</span>
<svg style="left:389px;top:438px" width="9" height="9"><rect x="0.5" y="0.5" width="8" height="8" rx="1" fill="#e9eef5" stroke="#8fa3bf"/><path d="M2.2 4.5 H6.8" stroke="#2a3f73" stroke-width="1.2"/></svg>
<span class="t " style="top:454.00px;font-size:12.8px;line-height:17px;color:#000000;letter-spacing:0.537px;left:412.60px;">ИП "Арарат"</span>
<span class="t " style="top:474.00px;font-size:12.8px;line-height:17px;color:#000000;letter-spacing:0.425px;left:412.60px;">ООО "Доставка"</span>
<span class="t " style="top:495.00px;font-size:12.3px;line-height:16px;color:#000000;font-weight:bold;letter-spacing:0.450px;left:399.60px;">Санкт-Петербург</span>
<svg style="left:389px;top:498px" width="9" height="9"><rect x="0.5" y="0.5" width="8" height="8" rx="1" fill="#e9eef5" stroke="#8fa3bf"/><path d="M2.2 4.5 H6.8" stroke="#2a3f73" stroke-width="1.2"/></svg>
<span class="t " style="top:514.00px;font-size:12.8px;line-height:17px;color:#000000;letter-spacing:0.611px;left:412.60px;">группа "Откат"</span>
<span class="t " style="top:534.00px;font-size:12.8px;line-height:17px;color:#000000;letter-spacing:0.657px;left:412.60px;">группа "Розница"</span>
<span class="t " style="top:555.00px;font-size:12.3px;line-height:16px;color:#000000;font-weight:bold;letter-spacing:0.542px;left:386.60px;">Общий итог</span>
<span class="t " style="top:315.00px;font-size:12.3px;line-height:16px;color:#000000;font-weight:bold;letter-spacing:0.051px;left:680.30px;">267500</span>
<span class="t " style="top:315.00px;font-size:12.3px;line-height:16px;color:#000000;font-weight:bold;letter-spacing:0.051px;left:781.30px;">154500</span>
<span class="t " style="top:315.00px;font-size:12.3px;line-height:16px;color:#000000;font-weight:bold;letter-spacing:0.051px;left:927.30px;">162000</span>
<span class="t " style="top:315.00px;font-size:12.3px;line-height:16px;color:#000000;font-weight:bold;letter-spacing:0.051px;left:1075.30px;">165000</span>
<span class="t " style="top:315.00px;font-size:12.3px;line-height:16px;color:#000000;font-weight:bold;letter-spacing:0.051px;left:1243.30px;">442800</span>
<span class="t " style="top:315.00px;font-size:12.3px;line-height:16px;color:#000000;font-weight:bold;letter-spacing:0.051px;left:1338.30px;">353400</span>
<span class="t " style="top:315.00px;font-size:12.3px;line-height:16px;color:#000000;font-weight:bold;letter-spacing:0.071px;left:1415.30px;">1545200</span>
<span class="t " style="top:335.00px;font-size:12.5px;line-height:16px;color:#000000;letter-spacing:-0.084px;left:680.30px;">150000</span>
<span class="t " style="top:335.00px;font-size:12.5px;line-height:16px;color:#000000;letter-spacing:-0.116px;left:788.30px;">75000</span>
<span class="t " style="top:335.00px;font-size:12.5px;line-height:16px;color:#000000;letter-spacing:-0.116px;left:934.30px;">81000</span>
<span class="t " style="top:335.00px;font-size:12.5px;line-height:16px;color:#000000;letter-spacing:-0.116px;left:1082.30px;">66000</span>
<span class="t " style="top:335.00px;font-size:12.5px;line-height:16px;color:#000000;letter-spacing:-0.084px;left:1243.30px;">205200</span>
<span class="t " style="top:335.00px;font-size:12.5px;line-height:16px;color:#000000;letter-spacing:-0.084px;left:1338.30px;">201400</span>
<span class="t " style="top:335.00px;font-size:12.5px;line-height:16px;color:#000000;letter-spacing:-0.084px;left:1422.30px;">778600</span>
<span class="t " style="top:355.00px;font-size:12.5px;line-height:16px;color:#000000;letter-spacing:0.101px;left:680.30px;">117500</span>
<span class="t " style="top:355.00px;font-size:12.5px;line-height:16px;color:#000000;letter-spacing:-0.116px;left:788.30px;">79500</span>
<span class="t " style="top:355.00px;font-size:12.5px;line-height:16px;color:#000000;letter-spacing:-0.116px;left:934.30px;">81000</span>
<span class="t " style="top:355.00px;font-size:12.5px;line-height:16px;color:#000000;letter-spacing:-0.116px;left:1082.30px;">99000</span>
<span class="t " style="top:355.00px;font-size:12.5px;line-height:16px;color:#000000;letter-spacing:-0.084px;left:1243.30px;">237600</span>
<span class="t " style="top:355.00px;font-size:12.5px;line-height:16px;color:#000000;letter-spacing:-0.084px;left:1338.30px;">152000</span>
<span class="t " style="top:355.00px;font-size:12.5px;line-height:16px;color:#000000;letter-spacing:-0.084px;left:1422.30px;">766600</span>
<span class="t " style="top:375.00px;font-size:12.3px;line-height:16px;color:#000000;font-weight:bold;letter-spacing:0.051px;left:680.30px;">172500</span>
<span class="t " style="top:375.00px;font-size:12.3px;line-height:16px;color:#000000;font-weight:bold;letter-spacing:0.051px;left:781.30px;">144000</span>
<span class="t " style="top:375.00px;font-size:12.3px;line-height:16px;color:#000000;font-weight:bold;letter-spacing:0.051px;left:927.30px;">196200</span>
<span class="t " style="top:375.00px;font-size:12.3px;line-height:16px;color:#000000;font-weight:bold;letter-spacing:0.051px;left:1075.30px;">253000</span>
<span class="t " style="top:375.00px;font-size:12.3px;line-height:16px;color:#000000;font-weight:bold;letter-spacing:0.051px;left:1243.30px;">248400</span>
<span class="t " style="top:375.00px;font-size:12.3px;line-height:16px;color:#000000;font-weight:bold;letter-spacing:0.051px;left:1338.30px;">319200</span>
<span class="t " style="top:375.00px;font-size:12.3px;line-height:16px;color:#000000;font-weight:bold;letter-spacing:0.071px;left:1415.30px;">1333300</span>
<span class="t " style="top:395.00px;font-size:12.5px;line-height:16px;color:#000000;letter-spacing:-0.116px;left:687.30px;">75000</span>
<span class="t " style="top:395.00px;font-size:12.5px;line-height:16px;color:#000000;letter-spacing:-0.116px;left:788.30px;">79500</span>
<span class="t " style="top:395.00px;font-size:12.5px;line-height:16px;color:#000000;letter-spacing:0.288px;left:927.30px;">111600</span>
<span class="t " style="top:395.00px;font-size:12.5px;line-height:16px;color:#000000;letter-spacing:0.101px;left:1075.30px;">116600</span>
<span class="t " style="top:395.00px;font-size:12.5px;line-height:16px;color:#000000;letter-spacing:-0.084px;left:1243.30px;">151200</span>
<span class="t " style="top:395.00px;font-size:12.5px;line-height:16px;color:#000000;letter-spacing:-0.084px;left:1338.30px;">148200</span>
<span class="t " style="top:395.00px;font-size:12.5px;line-height:16px;color:#000000;letter-spacing:-0.084px;left:1422.30px;">682100</span>
<span class="t " style="top:415.00px;font-size:12.5px;line-height:16px;color:#000000;letter-spacing:-0.116px;left:687.30px;">97500</span>
<span class="t " style="top:415.00px;font-size:12.5px;line-height:16px;color:#000000;letter-spacing:-0.116px;left:788.30px;">64500</span>
<span class="t " style="top:415.00px;font-size:12.5px;line-height:16px;color:#000000;letter-spacing:-0.116px;left:934.30px;">84600</span>
<span class="t " style="top:415.00px;font-size:12.5px;line-height:16px;color:#000000;letter-spacing:-0.084px;left:1075.30px;">136400</span>
<span class="t " style="top:415.00px;font-size:12.5px;line-height:16px;color:#000000;letter-spacing:-0.116px;left:1250.30px;">97200</span>
<span class="t " style="top:415.00px;font-size:12.5px;line-height:16px;color:#000000;letter-spacing:-0.084px;left:1338.30px;">171000</span>
<span class="t " style="top:415.00px;font-size:12.5px;line-height:16px;color:#000000;letter-spacing:-0.084px;left:1422.30px;">651200</span>
<span class="t " style="top:435.00px;font-size:12.3px;line-height:16px;color:#000000;font-weight:bold;letter-spacing:0.051px;left:680.30px;">237500</span>
<span class="t " style="top:435.00px;font-size:12.3px;line-height:16px;color:#000000;font-weight:bold;letter-spacing:0.024px;left:788.30px;">94500</span>
<span class="t " style="top:435.00px;font-size:12.3px;line-height:16px;color:#000000;font-weight:bold;letter-spacing:0.051px;left:927.30px;">127800</span>
<span class="t " style="top:435.00px;font-size:12.3px;line-height:16px;color:#000000;font-weight:bold;letter-spacing:0.051px;left:1075.30px;">193600</span>
<span class="t " style="top:435.00px;font-size:12.3px;line-height:16px;color:#000000;font-weight:bold;letter-spacing:0.051px;left:1243.30px;">291600</span>
<span class="t " style="top:435.00px;font-size:12.3px;line-height:16px;color:#000000;font-weight:bold;letter-spacing:0.051px;left:1338.30px;">406600</span>
<span class="t " style="top:435.00px;font-size:12.3px;line-height:16px;color:#000000;font-weight:bold;letter-spacing:0.071px;left:1415.30px;">1351600</span>
<span class="t " style="top:455.00px;font-size:12.5px;line-height:16px;color:#000000;letter-spacing:0.101px;left:680.30px;">112500</span>
<span class="t " style="top:455.00px;font-size:12.5px;line-height:16px;color:#000000;letter-spacing:-0.116px;left:788.30px;">40500</span>
<span class="t " style="top:455.00px;font-size:12.5px;line-height:16px;color:#000000;letter-spacing:-0.116px;left:934.30px;">79200</span>
<span class="t " style="top:455.00px;font-size:12.5px;line-height:16px;color:#000000;letter-spacing:-0.116px;left:1082.30px;">99000</span>
<span class="t " style="top:455.00px;font-size:12.5px;line-height:16px;color:#000000;letter-spacing:-0.084px;left:1243.30px;">129600</span>
<span class="t " style="top:455.00px;font-size:12.5px;line-height:16px;color:#000000;letter-spacing:-0.084px;left:1338.30px;">190000</span>
<span class="t " style="top:455.00px;font-size:12.5px;line-height:16px;color:#000000;letter-spacing:-0.084px;left:1422.30px;">650800</span>
<span class="t " style="top:475.00px;font-size:12.5px;line-height:16px;color:#000000;letter-spacing:-0.084px;left:680.30px;">125000</span>
<span class="t " style="top:475.00px;font-size:12.5px;line-height:16px;color:#000000;letter-spacing:-0.116px;left:788.30px;">54000</span>
<span class="t " style="top:475.00px;font-size:12.5px;line-height:16px;color:#000000;letter-spacing:-0.116px;left:934.30px;">48600</span>
<span class="t " style="top:475.00px;font-size:12.5px;line-height:16px;color:#000000;letter-spacing:-0.116px;left:1082.30px;">94600</span>
<span class="t " style="top:475.00px;font-size:12.5px;line-height:16px;color:#000000;letter-spacing:-0.084px;left:1243.30px;">162000</span>
<span class="t " style="top:475.00px;font-size:12.5px;line-height:16px;color:#000000;letter-spacing:-0.084px;left:1338.30px;">216600</span>
<span class="t " style="top:475.00px;font-size:12.5px;line-height:16px;color:#000000;letter-spacing:-0.084px;left:1422.30px;">700800</span>
<span class="t " style="top:495.00px;font-size:12.3px;line-height:16px;color:#000000;font-weight:bold;letter-spacing:0.051px;left:680.30px;">242500</span>
<span class="t " style="top:495.00px;font-size:12.3px;line-height:16px;color:#000000;font-weight:bold;letter-spacing:0.051px;left:781.30px;">160500</span>
<span class="t " style="top:495.00px;font-size:12.3px;line-height:16px;color:#000000;font-weight:bold;letter-spacing:0.051px;left:927.30px;">160200</span>
<span class="t " style="top:495.00px;font-size:12.3px;line-height:16px;color:#000000;font-weight:bold;letter-spacing:0.051px;left:1075.30px;">180400</span>
<span class="t " style="top:495.00px;font-size:12.3px;line-height:16px;color:#000000;font-weight:bold;letter-spacing:0.051px;left:1243.30px;">378000</span>
<span class="t " style="top:495.00px;font-size:12.3px;line-height:16px;color:#000000;font-weight:bold;letter-spacing:0.051px;left:1338.30px;">285000</span>
<span class="t " style="top:495.00px;font-size:12.3px;line-height:16px;color:#000000;font-weight:bold;letter-spacing:0.071px;left:1415.30px;">1406600</span>
<span class="t " style="top:515.00px;font-size:12.5px;line-height:16px;color:#000000;letter-spacing:-0.084px;left:680.30px;">100000</span>
<span class="t " style="top:515.00px;font-size:12.5px;line-height:16px;color:#000000;letter-spacing:-0.116px;left:788.30px;">93000</span>
<span class="t " style="top:515.00px;font-size:12.5px;line-height:16px;color:#000000;letter-spacing:-0.116px;left:934.30px;">95400</span>
<span class="t " style="top:515.00px;font-size:12.5px;line-height:16px;color:#000000;letter-spacing:-0.116px;left:1082.30px;">99000</span>
<span class="t " style="top:515.00px;font-size:12.5px;line-height:16px;color:#000000;letter-spacing:-0.084px;left:1243.30px;">198000</span>
<span class="t " style="top:515.00px;font-size:12.5px;line-height:16px;color:#000000;letter-spacing:0.101px;left:1338.30px;">114000</span>
<span class="t " style="top:515.00px;font-size:12.5px;line-height:16px;color:#000000;letter-spacing:-0.084px;left:1422.30px;">699400</span>
<span class="t " style="top:535.00px;font-size:12.5px;line-height:16px;color:#000000;letter-spacing:-0.084px;left:680.30px;">142500</span>
<span class="t " style="top:535.00px;font-size:12.5px;line-height:16px;color:#000000;letter-spacing:-0.116px;left:788.30px;">67500</span>
<span class="t " style="top:535.00px;font-size:12.5px;line-height:16px;color:#000000;letter-spacing:-0.116px;left:934.30px;">64800</span>
<span class="t " style="top:535.00px;font-size:12.5px;line-height:16px;color:#000000;letter-spacing:-0.116px;left:1082.30px;">81400</span>
<span class="t " style="top:535.00px;font-size:12.5px;line-height:16px;color:#000000;letter-spacing:-0.084px;left:1243.30px;">180000</span>
<span class="t " style="top:535.00px;font-size:12.5px;line-height:16px;color:#000000;letter-spacing:-0.084px;left:1338.30px;">171000</span>
<span class="t " style="top:535.00px;font-size:12.5px;line-height:16px;color:#000000;letter-spacing:-0.084px;left:1422.30px;">707200</span>
<span class="t " style="top:555.00px;font-size:12.3px;line-height:16px;color:#000000;font-weight:bold;letter-spacing:0.051px;left:680.30px;">920000</span>
<span class="t " style="top:555.00px;font-size:12.3px;line-height:16px;color:#000000;font-weight:bold;letter-spacing:0.051px;left:781.30px;">553500</span>
<span class="t " style="top:555.00px;font-size:12.3px;line-height:16px;color:#000000;font-weight:bold;letter-spacing:0.051px;left:927.30px;">646200</span>
<span class="t " style="top:555.00px;font-size:12.3px;line-height:16px;color:#000000;font-weight:bold;letter-spacing:0.051px;left:1075.30px;">792000</span>
<span class="t " style="top:555.00px;font-size:12.3px;line-height:16px;color:#000000;font-weight:bold;letter-spacing:0.071px;left:1236.30px;">1360800</span>
<span class="t " style="top:555.00px;font-size:12.3px;line-height:16px;color:#000000;font-weight:bold;letter-spacing:0.071px;left:1331.30px;">1364200</span>
<span class="t " style="top:555.00px;font-size:12.3px;line-height:16px;color:#000000;font-weight:bold;letter-spacing:0.071px;left:1415.30px;">5636700</span>
<div class="a" style="left:707px;top:273px;width:16px;height:16px;background:#f3f3f3;border:1px solid #9a9a9a;"></div>
<svg style="left:711px;top:279px" width="8" height="5"><path d="M0 0 H7 L3.5 4 Z" fill="#555"/></svg>
<div class="a" style="left:561px;top:293px;width:16px;height:16px;background:#f3f3f3;border:1px solid #9a9a9a;"></div>
<svg style="left:565px;top:299px" width="8" height="5"><path d="M0 0 H7 L3.5 4 Z" fill="#555"/></svg>
<div class="a" style="left:459px;top:772px;width:60px;height:25px;background:#ffffff;border-bottom:2px solid #217346;"></div>
<span class="t " style="top:777.00px;font-size:13px;line-height:17px;color:#217346;font-weight:bold;letter-spacing:-0.238px;left:470.60px;">Лист6</span>
<span class="t " style="top:778.00px;font-size:12.4px;line-height:16px;color:#ffffff;letter-spacing:0.043px;left:531.60px;">Лист5</span>
<span class="t " style="top:778.00px;font-size:12.4px;line-height:16px;color:#ffffff;letter-spacing:-0.082px;left:591.60px;">Лист1</span>
<span class="t " style="top:778.00px;font-size:12.4px;line-height:16px;color:#ffffff;letter-spacing:-0.082px;left:651.60px;">Лист2</span>
<span class="t " style="top:778.00px;font-size:12.4px;line-height:16px;color:#ffffff;letter-spacing:0.043px;left:711.60px;">Лист3</span>
<span class="t " style="top:778.00px;font-size:12.4px;line-height:16px;color:#ffffff;letter-spacing:0.043px;left:771.60px;">Лист4</span>
<div class="a" style="left:579px;top:775px;width:1px;height:20px;background:#8a8a8a;"></div>
<div class="a" style="left:639px;top:775px;width:1px;height:20px;background:#8a8a8a;"></div>
<div class="a" style="left:699px;top:775px;width:1px;height:20px;background:#8a8a8a;"></div>
<div class="a" style="left:759px;top:775px;width:1px;height:20px;background:#8a8a8a;"></div>
<div class="a" style="left:819px;top:775px;width:1px;height:20px;background:#8a8a8a;"></div>
<svg style="left:385px;top:780px" width="36" height="10"><path d="M6.5 1 V9 L2 5 Z M29 1 V9 L33.5 5 Z" fill="#a2a2a2"/></svg>
<svg style="left:851px;top:777px" width="17" height="17"><circle cx="8.5" cy="8.5" r="7.2" fill="none" stroke="#fff" stroke-width="1.3"/><path d="M8.5 4.5 V12.5 M4.5 8.5 H12.5" stroke="#fff" stroke-width="1.5"/></svg>
<div class="a" style="left:1036px;top:781px;width:2px;height:2px;background:#fff;"></div>
<div class="a" style="left:1036px;top:785px;width:2px;height:2px;background:#fff;"></div>
<div class="a" style="left:1036px;top:789px;width:2px;height:2px;background:#fff;"></div>
<div class="a" style="left:1053px;top:779px;width:413px;height:14px;background:#4d4d4d;"></div>
<div class="a" style="left:1053px;top:779px;width:14px;height:14px;background:#999999;border:1px solid #5a5a5a;"></div>
<div class="a" style="left:1452px;top:779px;width:14px;height:14px;background:#999999;border:1px solid #5a5a5a;"></div>
<div class="a" style="left:1067px;top:779px;width:336px;height:14px;background:#999999;border:1px solid #5a5a5a;"></div>
<svg style="left:1053px;top:779px" width="14" height="14"><path d="M9 3.5 V10.5 L4.5 7 Z" fill="#333"/></svg>
<svg style="left:1452px;top:779px" width="14" height="14"><path d="M5 3.5 V10.5 L9.5 7 Z" fill="#333"/></svg>
<div class="a" style="left:1470px;top:214px;width:15px;height:558px;background:#4d4d4d;"></div>
<div class="a" style="left:1470px;top:214px;width:15px;height:15px;background:#999999;border:1px solid #5a5a5a;"></div>
<div class="a" style="left:1470px;top:229px;width:15px;height:508px;background:#999999;border:1px solid #5a5a5a;"></div>
<div class="a" style="left:1470px;top:759px;width:15px;height:13px;background:#999999;border:1px solid #5a5a5a;"></div>
<svg style="left:1470px;top:214px" width="15" height="15"><path d="M4 9.5 H11 L7.5 5 Z" fill="#333"/></svg>
<svg style="left:1470px;top:759px" width="15" height="13"><path d="M4 4.5 H11 L7.5 9 Z" fill="#333"/></svg>
<div class="a" style="left:8px;top:800px;width:1481px;height:1px;background:#505050;"></div>
<div class="a" style="left:1174px;top:800px;width:40px;height:22px;background:#444444;"></div>
<span class="t " style="top:804.00px;font-size:11.5px;line-height:14px;color:#ffffff;letter-spacing:-0.777px;left:1439.60px;">100 %</span>
<div class="a" style="left:1312px;top:810.5px;width:100px;height:1px;background:#ffffff;"></div>
<div class="a" style="left:1361px;top:805px;width:5px;height:11px;background:#ffffff;"></div>
<div class="a" style="left:1300px;top:810.5px;width:7px;height:1px;background:#d0d0d0;"></div>
<div class="a" style="left:1417px;top:810.5px;width:8px;height:1px;background:#d0d0d0;"></div>
<div class="a" style="left:1420.5px;top:807px;width:1px;height:8px;background:#d0d0d0;"></div>
<svg style="left:31px;top:18.8px" width="15" height="15" viewBox="0 0 15 15" ><path d="M0 0.6 Q0 0 0.6 0 H13.4 Q14 0 14 0.6 V13.4 Q14 14 13.4 14 H0.6 Q0 14 0 13.4 Z" fill="#ffffff"/><rect x="2.4" y="1.4" width="9.2" height="5.4" fill="#444"/><rect x="3.2" y="9.4" width="7.6" height="3.4" fill="#444"/><rect x="5" y="11.2" width="1.8" height="1.8" fill="#ffffff"/></svg>
<svg style="left:59px;top:18px" width="17" height="15" viewBox="0 0 17 15" ><path d="M3 5 H9.2 Q14.6 5.2 14.6 9 Q14.6 12.4 9.6 13.2" fill="none" stroke="#ffffff" stroke-width="2"/><path d="M7.2 1.2 L2.2 5 L7.2 8.8" fill="none" stroke="#ffffff" stroke-width="2.4"/></svg>
<svg style="left:79px;top:24px" width="6" height="4" viewBox="0 0 6 4" ><path d="M0 0 H5 L2.5 3 Z" fill="#ffffff"/></svg>
<svg style="left:94px;top:18px" width="17" height="15" viewBox="0 0 17 15" ><path d="M14 5 H7.8 Q2.4 5.2 2.4 9 Q2.4 12.4 7.4 13.2" fill="none" stroke="#7d7d7d" stroke-width="2"/><path d="M9.8 1.2 L14.8 5 L9.8 8.8" fill="none" stroke="#7d7d7d" stroke-width="2.4"/></svg>
<svg style="left:114px;top:24px" width="6" height="4" viewBox="0 0 6 4" ><path d="M0 0 H5 L2.5 3 Z" fill="#7d7d7d"/></svg>
<svg style="left:131px;top:18px" width="15" height="16" viewBox="0 0 15 16" ><text x="0" y="7.2" font-size="8.8" font-family="Liberation Sans,sans-serif" fill="#7d7d7d">Я</text><text x="0" y="15.4" font-size="8.8" font-family="Liberation Sans,sans-serif" fill="#7d7d7d">А</text><path d="M10.5 1 V14 M7.5 11 L10.5 14.2 L13.5 11" fill="none" stroke="#7d7d7d" stroke-width="1.2"/></svg>
<svg style="left:160px;top:18px" width="15" height="16" viewBox="0 0 15 16" ><text x="0" y="7.2" font-size="8.8" font-family="Liberation Sans,sans-serif" fill="#7d7d7d">А</text><text x="0" y="15.4" font-size="8.8" font-family="Liberation Sans,sans-serif" fill="#7d7d7d">Я</text><path d="M10.5 1 V14 M7.5 11 L10.5 14.2 L13.5 11" fill="none" stroke="#7d7d7d" stroke-width="1.2"/></svg>
<svg style="left:188px;top:19px" width="15" height="14" viewBox="0 0 15 14" ><path d="M0 4 H5 M2.5 1.5 V6.5" stroke="#7d7d7d" stroke-width="1.6"/><path d="M6 0.5 H14 M8 3 H14 M8 5.5 H14 M8 8 H14 M8 10.5 H14 M6 13 H14" stroke="#7d7d7d" stroke-width="1"/></svg>
<svg style="left:217px;top:19px" width="15" height="14" viewBox="0 0 15 14" ><path d="M0 4 H6" stroke="#7d7d7d" stroke-width="1.6"/><path d="M6 0.5 H14 M10 3 H14 M10 5.5 H14 M10 8 H14 M10 10.5 H14 M6 13 H14" stroke="#7d7d7d" stroke-width="1"/></svg>
<svg style="left:245px;top:19px" width="17" height="16" viewBox="0 0 17 16" ><path d="M0.5 0 H12 L7.2 5.5 V10.5 H5.2 V5.5 Z" fill="#7d7d7d"/><path d="M8 8 L15.5 15 M15.5 8 L8 15" stroke="#7d7d7d" stroke-width="1.5"/></svg>
<svg style="left:274px;top:17.5px" width="17" height="17" viewBox="0 0 17 17" ><rect x="0.6" y="0.6" width="15.3" height="15.3" fill="none" stroke="#ffffff" stroke-width="1.2"/><rect x="2.3" y="2.3" width="2.6" height="2.6" fill="#ffffff"/><rect x="5.8" y="2.3" width="8.2" height="2.6" fill="#ffffff"/><rect x="2.3" y="5.8" width="2.6" height="8" fill="#ffffff"/><path d="M6.5 11.5 H11.5 V6.5 M8.5 9.5 L6.5 11.5 L8.5 13.5 M9.7 8.3 L11.5 6.3 L13.3 8.3" fill="none" stroke="#ffffff" stroke-width="1.2"/></svg>
<svg style="left:304px;top:19px" width="17" height="16" viewBox="0 0 17 16" ><path d="M0.5 0 H12 L7.2 5.5 V11 H5.2 V5.5 Z" fill="#7d7d7d"/><path d="M8.3 9.5 A3.6 3.6 0 0 1 14.8 8.2 M15 12 A3.6 3.6 0 0 1 8.5 13.3" fill="none" stroke="#7d7d7d" stroke-width="1.5"/><path d="M15.6 6 V9 H12.6 Z M7.8 15.5 V12.5 H10.8 Z" fill="#7d7d7d"/></svg>
<svg style="left:328.5px;top:18.5px" width="16" height="15" viewBox="0 0 16 15" ><rect x="0" y="6" width="4" height="9" fill="#ffffff"/><rect x="5.4" y="0" width="4" height="15" fill="#ffffff"/><rect x="10.8" y="3.5" width="4" height="11.5" fill="#ffffff"/></svg>
<svg style="left:350px;top:24px" width="6" height="4" viewBox="0 0 6 4" ><path d="M0 0 H5 L2.5 3 Z" fill="#ffffff"/></svg>
<svg style="left:369.5px;top:21.5px" width="9" height="8" viewBox="0 0 9 8" ><path d="M0 0.6 H8.4" stroke="#ffffff" stroke-width="1.1"/><path d="M0.6 3.2 L4.2 6.6 L7.8 3.2" fill="none" stroke="#ffffff" stroke-width="1.1"/></svg>
<svg style="left:1319.5px;top:19px" width="14" height="11" viewBox="0 0 14 11" ><rect x="0.5" y="0.5" width="13" height="9.5" fill="none" stroke="#ffffff"/><path d="M0.5 2.5 H13.5" stroke="#ffffff"/><path d="M7 4.3 V8.5 M5 6.2 L7 4.2 L9 6.2" fill="none" stroke="#ffffff" stroke-width="1"/></svg>
<div class="a" style="left:1367px;top:24px;width:11px;height:1px;background:#ffffff;"></div>
<svg style="left:1413px;top:18px" width="12" height="12" viewBox="0 0 12 12" ><rect x="1.2" y="1.2" width="9.6" height="9.6" fill="none" stroke="#ffffff" stroke-width="1.1"/></svg>
<svg style="left:1460px;top:18.6px" width="11" height="11" viewBox="0 0 11 11" ><path d="M0.5 0.5 L10 10 M10 0.5 L0.5 10" stroke="#ffffff" stroke-width="1.1"/></svg>
<svg style="left:1122px;top:49px" width="12" height="18" viewBox="0 0 12 18" ><path d="M3.6 11.5 C3.6 9.5 0.8 8.5 0.8 5.4 A4.8 4.8 0 0 1 10.4 5.4 C10.4 8.5 7.6 9.5 7.6 11.5 Z" fill="none" stroke="#ffffff" stroke-width="1.1"/><path d="M3.6 13.5 H7.6 M4.2 15.6 H7" stroke="#ffffff" stroke-width="1.1"/></svg>
<svg style="left:1333px;top:49px" width="16" height="17" viewBox="0 0 16 17" ><circle cx="8" cy="4.8" r="3.8" fill="none" stroke="#ffffff" stroke-width="1.1"/><path d="M0.8 16 C1.2 11.5 4 9.3 6.5 9" fill="none" stroke="#ffffff" stroke-width="1.1"/><path d="M8.5 13 H15 M11.7 9.8 V16.2" stroke="#ffffff" stroke-width="1.1"/></svg>
<svg style="left:1456.5px;top:47.8px" width="18" height="18" viewBox="0 0 18 18" ><circle cx="8.7" cy="8.7" r="8.3" fill="#fcc80c"/><circle cx="5.9" cy="6.2" r="1.2" fill="#333"/><circle cx="11.5" cy="6.2" r="1.2" fill="#333"/><path d="M4.2 10 Q8.7 15.5 13.2 10" fill="none" stroke="#333" stroke-width="1.3"/></svg>
<svg style="left:65.0px;top:134.0px" width="6" height="4" viewBox="0 0 6 4" ><path d="M0 0 H5 L2.5 3 Z" fill="#444"/></svg>
<svg style="left:311.0px;top:136.0px" width="6" height="4" viewBox="0 0 6 4" ><path d="M0 0 H5 L2.5 3 Z" fill="#808080"/></svg>
<svg style="left:820.0px;top:135.5px" width="6" height="4" viewBox="0 0 6 4" ><path d="M0 0 H5 L2.5 3 Z" fill="#444"/></svg>
<svg style="left:900.5px;top:136.0px" width="6" height="4" viewBox="0 0 6 4" ><path d="M0 0 H5 L2.5 3 Z" fill="#444"/></svg>
<svg style="left:949.5px;top:133.5px" width="6" height="4" viewBox="0 0 6 4" ><path d="M0 0 H5 L2.5 3 Z" fill="#444"/></svg>
<svg style="left:1165.5px;top:86.5px" width="6" height="4" viewBox="0 0 6 4" ><path d="M0 0 H5 L2.5 3 Z" fill="#444"/></svg>
<svg style="left:1102.0px;top:109.5px" width="6" height="4" viewBox="0 0 6 4" ><path d="M0 0 H5 L2.5 3 Z" fill="#808080"/></svg>
<svg style="left:1401.5px;top:133.5px" width="6" height="4" viewBox="0 0 6 4" ><path d="M0 0 H5 L2.5 3 Z" fill="#444"/></svg>
<svg style="left:35.5px;top:83.5px" width="17" height="17" viewBox="0 0 17 17" ><rect x="0.5" y="0.5" width="12.5" height="12" fill="#fff" stroke="#6a6a6a"/><rect x="2" y="2" width="3" height="3" fill="#9a9a9a"/><rect x="6" y="2" width="6" height="3" fill="#9a9a9a"/><rect x="2" y="6" width="3" height="5.5" fill="#9a9a9a"/><rect x="7.5" y="5.5" width="9" height="11" fill="#fff" stroke="#4a4a4a"/><rect x="7.5" y="5.5" width="9" height="2.4" fill="#2b579a"/><rect x="9.3" y="9.5" width="2.2" height="2" fill="#777"/><rect x="12.6" y="9.5" width="2.2" height="2" fill="#777"/><rect x="9.3" y="12.8" width="2.2" height="2" fill="#777"/><rect x="12.6" y="12.8" width="2.2" height="2" fill="#777"/></svg>
<svg style="left:89.5px;top:125px" width="17" height="17" viewBox="0 0 17 17" ><rect x="0.5" y="0.5" width="12" height="11.5" fill="#fff" stroke="#6a6a6a"/><rect x="2" y="2" width="3" height="3" fill="#9a9a9a"/><rect x="6" y="2" width="5.5" height="3" fill="#9a9a9a"/><rect x="2" y="6" width="3" height="5" fill="#9a9a9a"/><circle cx="11.6" cy="11.2" r="5" fill="#2b579a"/><rect x="10.9" y="9.9" width="1.5" height="4.2" fill="#fff"/><rect x="10.9" y="7.7" width="1.5" height="1.5" fill="#fff"/></svg>
<svg style="left:236.5px;top:81.5px" width="22" height="27" viewBox="0 0 22 27" ><path d="M8.3 0.5 H13.7 V14.5 L21.5 7.5 V14.5 L11 26 L0.5 14.5 V7.5 L8.3 14.5 Z" fill="#808080"/></svg>
<svg style="left:303.5px;top:80.5px" width="22" height="27" viewBox="0 0 22 27" ><path d="M8.3 26.5 H13.7 V12.5 L21.5 19.5 V12.5 L11 1 L0.5 12.5 V19.5 L8.3 12.5 Z" fill="#808080"/></svg>
<svg style="left:346.5px;top:87.5px" width="15" height="14" viewBox="0 0 15 14" ><path d="M0 4.5 H5 M2.5 2 V7" stroke="#808080" stroke-width="1.2"/><path d="M6.5 1 H14.5 M6.5 7 H14.5 M6.5 13 H14.5" stroke="#808080" stroke-width="1"/></svg>
<svg style="left:346.5px;top:118.5px" width="15" height="14" viewBox="0 0 15 14" ><path d="M0 4.5 H5.5" stroke="#808080" stroke-width="1.4"/><path d="M6.5 1 H14.5 M6.5 7 H14.5 M6.5 13 H14.5" stroke="#808080" stroke-width="1"/></svg>
<svg style="left:385.5px;top:82.5px" width="13" height="10" viewBox="0 0 13 10" ><path d="M0.5 5 H10.5 M6.5 1 L10.8 5 L6.5 9" fill="none" stroke="#808080" stroke-width="1.9"/></svg>
<svg style="left:384px;top:102.5px" width="16" height="14" viewBox="0 0 16 14" ><rect x="0.5" y="4" width="5" height="6" fill="#ddd" stroke="#808080"/><path d="M1 9.5 L5 4.5" stroke="#808080"/><path d="M7.5 0.5 H3.5 V3 M3.5 11 V13.5 H7.5" fill="none" stroke="#808080" stroke-dasharray="1.5 1"/><rect x="8" y="0.8" width="7.2" height="12.2" fill="#e4e4e4" stroke="#808080"/><path d="M9.5 3.3 H13.7 M9.5 6.9 H13.7 M9.5 10.5 H13.7" stroke="#808080" stroke-width="1.4"/></svg>
<svg style="left:384.5px;top:125px" width="16" height="16" viewBox="0 0 16 16" ><path d="M0.5 9 V0.5 H11 V3" fill="none" stroke="#808080"/><path d="M2.5 11.5 V3 H12.5" fill="none" stroke="#808080"/><rect x="4.5" y="5.5" width="10" height="10" fill="#fff" stroke="#808080"/><text x="6.6" y="14.2" font-size="8.5" font-weight="bold" font-style="italic" font-family="Liberation Sans,sans-serif" fill="#555">7</text></svg>
<svg style="left:596.5px;top:79px" width="17" height="16" viewBox="0 0 17 16" ><rect x="0.6" y="0.6" width="15.4" height="14.6" fill="#fff" stroke="#3a3a3a" stroke-width="1.2"/><rect x="0.6" y="0.6" width="15.4" height="2.8" fill="#3a3a3a"/><rect x="2.2" y="4.6" width="12" height="2" fill="#2b579a"/><rect x="2.2" y="7.8" width="6" height="2" fill="#2b579a"/><rect x="2.2" y="11.4" width="6" height="2" fill="#b4c7e0"/><path d="M8.2 7.2 H15.8 L13 10.4 V13.6 H11 V10.4 Z" fill="#3a3a3a"/></svg>
<svg style="left:596.5px;top:104px" width="17" height="15" viewBox="0 0 17 15" ><rect x="0.6" y="0.6" width="15.4" height="8.4" fill="#fff" stroke="#3a3a3a" stroke-width="1.2"/><rect x="0.6" y="0.6" width="15.4" height="2.6" fill="#3a3a3a"/><path d="M2.3 6 H4.3 M5.3 6 H9.5 M10.5 6 H12.5" stroke="#2b579a" stroke-width="1.6"/><path d="M8 7.5 H16.5 L13.3 11 V14.6 H11.2 V11 Z" fill="#3a3a3a"/></svg>
<svg style="left:597px;top:126px" width="17" height="16" viewBox="0 0 17 16" ><rect x="0.5" y="0.5" width="9" height="7" fill="#d8d8d8" stroke="#808080"/><path d="M1 11 V14 H4 M2.5 9 V12" fill="none" stroke="#808080" stroke-width="0.8"/><rect x="6" y="4.5" width="10" height="10.5" fill="#eee" stroke="#808080"/><rect x="6" y="4.5" width="10" height="2.2" fill="#808080"/><path d="M8 8.5 H14.5 L12 11 V13.8 H10.5 V11 Z" fill="#808080"/></svg>
<svg style="left:811px;top:80px" width="29" height="31" viewBox="0 0 29 31" ><path d="M1 0.6 H14 L21 7.6 V28 H1 Z" fill="#fff" stroke="#6a6a6a" stroke-width="1.1"/><path d="M14 0.6 V7.6 H21" fill="none" stroke="#6a6a6a" stroke-width="1.1"/><path d="M13.6 21 A6.2 6.2 0 0 1 24.8 17.6 M26.6 23 A6.2 6.2 0 0 1 15.4 26.4" fill="none" stroke="#4a9a7a" stroke-width="2.6"/><path d="M27.4 14 V20 H21.4 Z M12.8 30 V24 H18.8 Z" fill="#4a9a7a"/></svg>
<svg style="left:870px;top:80px" width="28" height="31" viewBox="0 0 28 31" ><path d="M0.6 0.6 H13 L19.5 7 V26.5 H0.6 Z" fill="#fff" stroke="#6a6a6a" stroke-width="1.1"/><path d="M13 0.6 V7 H19.5" fill="none" stroke="#6a6a6a"/><path d="M3 6 H11 M3 9.5 H16 M3 13 H16 M3 16.5 H16 M3 20 H16 M3 23.5 H16 M3 6 V23.5 M6.3 6 V23.5 M9.6 6 V23.5 M12.9 9.5 V23.5 M16 9.5 V23.5" stroke="#9a9a9a" stroke-width="0.9" fill="none"/><rect x="11.5" y="14.5" width="15.5" height="15.5" fill="#fff" stroke="#555" stroke-width="1.1"/><rect x="13.2" y="16.3" width="2.6" height="2.6" fill="#8a8a8a"/><rect x="16.6" y="16.3" width="8.6" height="2.6" fill="#8a8a8a"/><rect x="13.2" y="19.8" width="2.6" height="8.4" fill="#8a8a8a"/><path d="M17.5 25.5 H22.5 V21 M19.5 23.5 L17.5 25.5 L19.5 27.5 M20.6 22.6 L22.5 20.6 L24.4 22.6" fill="none" stroke="#2b579a" stroke-width="1.3"/></svg>
<svg style="left:945px;top:84px" width="17" height="17" viewBox="0 0 17 17" ><rect x="0.5" y="0.5" width="12.5" height="12" fill="#fff" stroke="#6a6a6a"/><rect x="2" y="2" width="3" height="3" fill="#9a9a9a"/><rect x="6" y="2" width="6" height="3" fill="#9a9a9a"/><rect x="2" y="6" width="3" height="5.5" fill="#9a9a9a"/><path d="M11.5 5.5 L16 9.5 L10.5 15 L6 11 Z" fill="#e8526a"/><path d="M6 11 L8 9 L12.5 13 L10.5 15 Z" fill="#f6c9cf"/></svg>
<svg style="left:998.6px;top:80px" width="17" height="16" viewBox="0 0 17 16" ><rect x="0.5" y="0.5" width="12" height="11.5" fill="#fff" stroke="#444"/><rect x="2" y="2" width="2.6" height="2.6" fill="#8a8a8a"/><rect x="5.6" y="2" width="5" height="2.6" fill="#8a8a8a"/><rect x="2" y="5.6" width="2.6" height="4.6" fill="#8a8a8a"/><text x="6" y="14.6" font-size="11.5" font-style="italic" font-weight="bold" font-family="Liberation Serif,serif" fill="#222" letter-spacing="-0.5">fx</text></svg>
<svg style="left:998px;top:102.5px" width="17" height="17" viewBox="0 0 17 17" ><path d="M1 2.4 A4.4 1.8 0 0 1 9.8 2.4 V11.6 A4.4 1.8 0 0 1 1 11.6 Z" fill="#c2c2c2" stroke="#b8b8b8" stroke-width="0.6"/><text x="5.6" y="14.6" font-size="14" font-style="italic" font-family="Liberation Serif,serif" fill="#7c7c7c" letter-spacing="-0.6">fx</text></svg>
<svg style="left:998px;top:125px" width="17" height="16" viewBox="0 0 17 16" ><path d="M5.4 7.2 L10 3.4 M5.4 7.2 L9 12.2" stroke="#333" stroke-width="1.1" fill="none"/><rect x="0.6" y="4" width="4.8" height="6.2" fill="#fff" stroke="#444" stroke-width="0.9"/><rect x="0.2" y="3.6" width="5.6" height="1.8" fill="#2b579a"/><rect x="10" y="0.6" width="5.4" height="5.8" fill="#fff" stroke="#444" stroke-width="0.9"/><rect x="9.6" y="0.2" width="6.2" height="1.8" fill="#2b579a"/><rect x="9" y="9.4" width="5.4" height="5.8" fill="#fff" stroke="#444" stroke-width="0.9"/><rect x="8.6" y="9" width="6.2" height="1.8" fill="#2b579a"/><path d="M2 7.6 H4 M11.6 4 H13.8 M10.6 12.8 H12.8" stroke="#777" stroke-width="1"/></svg>
<svg style="left:1212.5px;top:82px" width="31" height="29" viewBox="0 0 31 29" ><rect x="0" y="8.5" width="7.5" height="17" fill="#2b579a"/><rect x="8.3" y="0" width="7" height="25.5" fill="#e8c36a"/><rect x="16.2" y="5" width="7" height="7.5" fill="#555"/><rect x="14.8" y="13.8" width="15.2" height="14.4" fill="#fff" stroke="#555" stroke-width="1.1"/><rect x="16.4" y="15.4" width="2.6" height="2.4" fill="#8a8a8a"/><rect x="19.8" y="15.4" width="8.6" height="2.4" fill="#8a8a8a"/><rect x="16.4" y="18.6" width="2.6" height="8" fill="#8a8a8a"/><path d="M21 24.2 H25.6 V20 M22.8 22.4 L21 24.2 L22.8 26 M23.8 21.6 L25.6 19.7 L27.4 21.6" fill="none" stroke="#2b579a" stroke-width="1.3"/></svg>
<svg style="left:1299px;top:82px" width="28" height="29" viewBox="0 0 28 29" ><rect x="0.6" y="0.6" width="22.5" height="21.5" fill="#fff" stroke="#555" stroke-width="1.1"/><rect x="2.6" y="2.6" width="4.4" height="4" fill="#8a8a8a"/><rect x="8" y="2.6" width="13" height="4" fill="#8a8a8a"/><rect x="2.6" y="7.8" width="4.4" height="12.4" fill="#8a8a8a"/><path d="M8 10 H16 M8 13 H15 M8 16 H14 M8 19 H15" stroke="#9a9a9a" stroke-width="1"/><text x="12.5" y="28" font-size="26" font-weight="bold" font-family="Liberation Sans,sans-serif" fill="#2b579a" stroke="#b2b2b2" stroke-width="0.6">?</text></svg>
<svg style="left:1398.5px;top:84px" width="11" height="17" viewBox="0 0 11 17" ><rect x="0.5" y="0.5" width="9.5" height="15.5" fill="#fff" stroke="#555"/><rect x="0.5" y="0.5" width="9.5" height="3" fill="#2b579a"/><path d="M2 6 H8.5 M2 9 H8.5 M2 12 H8.5 M2 14.5 H8.5" stroke="#555" stroke-width="1.2"/><path d="M5.2 5 V15.5" stroke="#fff" stroke-width="1"/></svg>
<svg style="left:1469.5px;top:155px" width="11" height="7" viewBox="0 0 11 7" ><path d="M0.8 5.8 L5.2 1.2 L9.6 5.8" fill="none" stroke="#333" stroke-width="1.1"/></svg>
<svg style="left:101.5px;top:185.5px" width="8" height="5" viewBox="0 0 8 5" ><path d="M0 0 H7 L3.5 4 Z" fill="#333"/></svg>
<div class="a" style="left:130px;top:184px;width:2px;height:2px;background:#ffffff;"></div>
<div class="a" style="left:130px;top:188px;width:2px;height:2px;background:#ffffff;"></div>
<div class="a" style="left:130px;top:192px;width:2px;height:2px;background:#ffffff;"></div>
<svg style="left:159px;top:184px" width="11" height="11" viewBox="0 0 11 11" ><path d="M1 1 L10 10 M10 1 L1 10" stroke="#8a8a8a" stroke-width="1.7"/></svg>
<svg style="left:195px;top:184px" width="13" height="11" viewBox="0 0 13 11" ><path d="M1 6 L4.6 9.6 L12 1.2" fill="none" stroke="#8a8a8a" stroke-width="2"/></svg>
<span class="t" style="left:231.5px;top:180px;font:italic bold 14px/18px 'Liberation Serif',serif;color:#333;letter-spacing:-0.5px">f<span style="font-size:10px">x</span></span>
<svg style="left:1469.5px;top:184.5px" width="10" height="7" viewBox="0 0 10 7" ><path d="M1 1 L5 5 L9 1" fill="none" stroke="#333" stroke-width="1.8"/></svg>
<svg style="left:288px;top:233px" width="10" height="6" viewBox="0 0 10 6" ><path d="M0 0 H9 L4.5 5 Z" fill="#eaeaea"/></svg>
<svg style="left:330px;top:230px" width="10" height="10" viewBox="0 0 10 10" ><path d="M0.8 0.8 L9 9 M9 0.8 L0.8 9" stroke="#f2f2f2" stroke-width="1.8"/></svg>
<svg style="left:311px;top:266px" width="12" height="12" viewBox="0 0 12 12" ><g transform="translate(6 6)" fill="#555"><circle r="3.9"/><g id="gt"><rect x="-1.2" y="-6" width="2.4" height="12"/></g><rect x="-1.2" y="-6" width="2.4" height="12" transform="rotate(45)"/><rect x="-1.2" y="-6" width="2.4" height="12" transform="rotate(90)"/><rect x="-1.2" y="-6" width="2.4" height="12" transform="rotate(135)"/><circle r="1.7" fill="#d4d4d4"/></g></svg>
<svg style="left:332px;top:270px" width="8" height="5" viewBox="0 0 8 5" ><path d="M0 0 H7 L3.5 4 Z" fill="#444"/></svg>
<svg style="left:328.5px;top:302px" width="13" height="13" viewBox="0 0 13 13" ><circle cx="8" cy="4.8" r="3.6" fill="none" stroke="#2b579a" stroke-width="1.5"/><path d="M5.4 7.4 L1 11.8" stroke="#2b579a" stroke-width="2"/></svg>
<svg style="left:31.5px;top:526.8px" width="9" height="12" viewBox="0 0 9 12" ><path d="M0 0 H8.4 L5.4 4.4 V11.2 H3 V4.4 Z" fill="#ffffff"/></svg>
<svg style="left:191px;top:528.5px" width="11" height="10" viewBox="0 0 11 10" ><path d="M1 0 V9 M3.5 0 V9 M6 0 V9 M8.5 0 V9" stroke="#ffffff" stroke-width="1.6"/></svg>
<svg style="left:30px;top:647px" width="11" height="9" viewBox="0 0 11 9" ><path d="M0 0.8 H10 M0 3.2 H10 M0 5.6 H10 M0 8 H10" stroke="#ffffff" stroke-width="1.4"/></svg>
<span class="t" style="left:192.5px;top:642.5px;font:bold 14px/18px 'Liberation Serif',serif;color:#fff">Σ</span>
<svg style="left:17px;top:804px" width="14" height="14" viewBox="0 0 14 14" ><circle cx="2.9" cy="3.2" r="3" fill="#e2e2e2"/><path d="M1.5 7 V12.7 H12.7 V1.4 H6.6" fill="none" stroke="#ffffff" stroke-width="1"/><rect x="6.6" y="0.9" width="6.6" height="2" fill="#ffffff"/><path d="M6.3 6.3 H8.1 M9.3 6.3 H11.1 M3.2 8.5 H5 M6.3 8.5 H8.1 M9.3 8.5 H11.1 M3.2 10.7 H5 M6.3 10.7 H8.1 M9.3 10.7 H11.1" stroke="#ffffff" stroke-width="1.1"/></svg>
<svg style="left:1187px;top:804px" width="13" height="13" viewBox="0 0 13 13" ><path d="M0.5 0.5 H12.5 V12.5 H0.5 Z M0.5 4.5 H12.5 M0.5 8.5 H12.5 M4.5 0.5 V12.5 M8.5 0.5 V12.5" fill="none" stroke="#ffffff" stroke-width="1"/></svg>
<svg style="left:1227px;top:804px" width="14" height="13" viewBox="0 0 14 13" ><rect x="0.5" y="0.5" width="13" height="12" fill="none" stroke="#ffffff"/><rect x="3" y="3" width="8" height="7" fill="none" stroke="#ffffff"/><path d="M4.8 5.3 H9.2 M4.8 7.6 H9.2" stroke="#ffffff" stroke-width="0.9"/></svg>
<svg style="left:1267px;top:804px" width="14" height="13" viewBox="0 0 14 13" ><rect x="0.5" y="0.5" width="13" height="12" fill="none" stroke="#ffffff"/><rect x="2.5" y="0.5" width="3" height="7.5" fill="#ffffff"/><rect x="7" y="0.5" width="4.2" height="7.5" fill="#ffffff"/><path d="M0.5 8 H13.5" stroke="#ffffff"/></svg>
<svg style="left:0;top:0;filter:drop-shadow(1.1px 1.5px 0.4px rgba(0,0,0,.45))" width="1497" height="831" viewBox="0 0 1497 831"><rect x="16.7" y="430.7" width="70.5" height="16.300000000000033" rx="5.5" ry="5.5" fill="none" stroke="#9c63ab" stroke-width="4.6"/>
<rect x="17.55" y="411.45" width="77.3" height="15.00000000000001" rx="5.5" ry="5.5" fill="none" stroke="#9bc94a" stroke-width="4.3"/>
<rect x="16.7" y="353.1" width="126.80000000000001" height="17.799999999999976" rx="6" ry="6" fill="none" stroke="#2f75b7" stroke-width="4.6"/>
<rect x="20.4" y="389.29999999999995" width="94.8" height="20.100000000000033" rx="6" ry="6" fill="none" stroke="#e53a2f" stroke-width="4.8"/>
<path d="M422.6 351.5 L534.9 352.2" fill="none" stroke="#9c63ab" stroke-width="4.4" stroke-linejoin="round" stroke-linecap="round" />
<path d="M406.3 372.4 L572.6 372.6" fill="none" stroke="#9c63ab" stroke-width="4.4" stroke-linejoin="round" stroke-linecap="round" />
<path d="M414.0 411.6 L529.6 411.8" fill="none" stroke="#9c63ab" stroke-width="4.4" stroke-linejoin="round" stroke-linecap="round" />
<path d="M407.6 434.8 L519.0 434.8" fill="none" stroke="#9c63ab" stroke-width="4.4" stroke-linejoin="round" stroke-linecap="round" />
<path d="M401.3 472.2 L514.0 471.5" fill="none" stroke="#9c63ab" stroke-width="4.4" stroke-linejoin="round" stroke-linecap="round" />
<path d="M397.2 492.8 L522.8 494.0" fill="none" stroke="#9c63ab" stroke-width="4.4" stroke-linejoin="round" stroke-linecap="round" />
<path d="M396.4 533.4 L522.3 534.0" fill="none" stroke="#9c63ab" stroke-width="4.4" stroke-linejoin="round" stroke-linecap="round" />
<path d="M398.8 555.4 L529.0 554.8" fill="none" stroke="#9c63ab" stroke-width="4.4" stroke-linejoin="round" stroke-linecap="round" />
<path d="M734 280.3 L1359 274.5 L1359.2 265.2 Q1359.4 262.6 1361.6 264.4 L1379.2 279.8 Q1380.4 281 1379.2 282.2 L1361 297.6 Q1358.6 299.4 1358.6 296.8 L1358.8 289 L734 285 Q731.5 282.6 734 280.3 Z" fill="#2f75b7"/>
<path d="M639.5 318.0 L652.0 319.6 L657.0 310.3 L664.5 319.8 L672.0 310.3 L679.5 319.8 L687.0 310.3 L694.5 319.8 L702.0 310.3 L709.5 319.8 L717.0 310.3 L724.5 319.8 L732.0 310.3 L739.5 319.8 L747.0 310.3 L754.5 319.8 L762.0 310.3 L769.5 319.8 L777.0 310.3 L784.5 319.8 L792.0 310.3 L799.5 319.8 L807.0 310.3 L814.5 319.8 L822.0 310.3 L829.5 319.8 L837.0 310.3 L844.5 319.8 L852.0 310.3 L859.5 319.8 L867.0 310.3 L874.5 319.8 L882.0 310.3 L889.5 319.8 L897.0 310.3 L904.5 319.8 L912.0 310.3 L919.5 319.8 L927.0 310.3 L934.5 319.8 L942.0 310.3 L949.5 319.8 L957.0 310.3 L964.5 319.8 L972.0 310.3 L979.5 319.8 L987.0 310.3 L994.5 319.8 L1002.0 310.3 L1009.5 319.8 L1017.0 310.3 L1024.5 319.8 L1032.0 310.3 L1039.5 319.8 L1047.0 310.3 L1054.5 319.8 L1062.0 310.3 L1069.5 319.8 L1077.0 310.3 L1084.5 319.8 L1092.0 310.3 L1099.5 319.8 L1107.0 310.3 L1114.5 319.8 L1122.0 310.3 L1129.5 319.8 L1137.0 310.3 L1144.5 319.8 L1152.0 310.3 L1159.5 319.8 L1167.0 310.3 L1174.5 319.8 L1182.0 310.3 L1189.5 319.8 L1197.0 310.3 L1204.5 319.8 L1212.0 310.3 L1219.5 319.8 L1227.0 310.3 L1234.5 319.8 L1242.0 310.3 L1249.5 319.8 L1257.0 310.3 L1264.5 319.8 L1272.0 310.3 L1279.5 319.8 L1287.0 310.3 L1294.5 319.8 L1302.0 310.3 L1309.5 319.8 L1317.0 310.3 L1324.5 319.8 L1332.0 310.3 L1339.5 319.8 L1347.0 310.3 L1354.5 319.8 L1362.0 310.3 L1369.5 319.8 L1377.0 310.3 L1382.2 319.6 L1392.6 318.2 L1390.6 329.6 L1400.4 335.2 L1391.6 342.7 L1400.4 350.2 L1391.6 357.7 L1400.4 365.3 L1391.6 372.8 L1400.4 380.3 L1391.6 387.8 L1400.4 395.3 L1391.6 402.8 L1400.4 410.3 L1391.6 417.8 L1400.4 425.4 L1391.6 432.9 L1400.4 440.4 L1391.6 447.9 L1400.4 455.4 L1391.6 462.9 L1400.4 470.4 L1391.6 478.0 L1400.4 485.5 L1391.6 493.0 L1400.4 500.5 L1391.6 508.0 L1400.4 515.5 L1391.6 523.0 L1400.4 530.5 L1391.6 538.1 L1400.4 545.6 L1391.6 553.1 L1400.4 560.6 L1390.4 566.0 L1392.6 577.6 L1381.8 575.8 L1377.0 585.9 L1369.5 576.0 L1362.0 585.9 L1354.5 576.0 L1347.0 585.9 L1339.5 576.0 L1332.0 585.9 L1324.5 576.0 L1317.0 585.9 L1309.5 576.0 L1302.0 585.9 L1294.5 576.0 L1287.0 585.9 L1279.5 576.0 L1272.0 585.9 L1264.5 576.0 L1257.0 585.9 L1249.5 576.0 L1242.0 585.9 L1234.5 576.0 L1227.0 585.9 L1219.5 576.0 L1212.0 585.9 L1204.5 576.0 L1197.0 585.9 L1189.5 576.0 L1182.0 585.9 L1174.5 576.0 L1167.0 585.9 L1159.5 576.0 L1152.0 585.9 L1144.5 576.0 L1137.0 585.9 L1129.5 576.0 L1122.0 585.9 L1114.5 576.0 L1107.0 585.9 L1099.5 576.0 L1092.0 585.9 L1084.5 576.0 L1077.0 585.9 L1069.5 576.0 L1062.0 585.9 L1054.5 576.0 L1047.0 585.9 L1039.5 576.0 L1032.0 585.9 L1024.5 576.0 L1017.0 585.9 L1009.5 576.0 L1002.0 585.9 L994.5 576.0 L987.0 585.9 L979.5 576.0 L972.0 585.9 L964.5 576.0 L957.0 585.9 L949.5 576.0 L942.0 585.9 L934.5 576.0 L927.0 585.9 L919.5 576.0 L912.0 585.9 L904.5 576.0 L897.0 585.9 L889.5 576.0 L882.0 585.9 L874.5 576.0 L867.0 585.9 L859.5 576.0 L852.0 585.9 L844.5 576.0 L837.0 585.9 L829.5 576.0 L822.0 585.9 L814.5 576.0 L807.0 585.9 L799.5 576.0 L792.0 585.9 L784.5 576.0 L777.0 585.9 L769.5 576.0 L762.0 585.9 L754.5 576.0 L747.0 585.9 L739.5 576.0 L732.0 585.9 L724.5 576.0 L717.0 585.9 L709.5 576.0 L702.0 585.9 L694.5 576.0 L687.0 585.9 L679.5 576.0 L672.0 585.9 L664.5 576.0 L657.0 585.9 L652.4 575.4 L642.0 577.0 L643.6 566.6 L632.4 561.2 L642.2 553.7 L632.4 546.1 L642.2 538.6 L632.4 531.0 L642.2 523.5 L632.4 515.9 L642.2 508.4 L632.4 500.8 L642.2 493.3 L632.4 485.7 L642.2 478.2 L632.4 470.6 L642.2 463.1 L632.4 455.6 L642.2 448.0 L632.4 440.5 L642.2 432.9 L632.4 425.4 L642.2 417.8 L632.4 410.3 L642.2 402.7 L632.4 395.2 L642.2 387.6 L632.4 380.1 L642.2 372.5 L632.4 365.0 L642.2 357.4 L632.4 349.9 L642.2 342.4 L632.4 334.0 L642.6 329.2 Z" fill="none" stroke="#e53a2f" stroke-width="5" stroke-linejoin="miter" stroke-miterlimit="10"/>
<g fill="#2f75b7"><circle cx="287.3" cy="555.8" r="4.3"/><circle cx="281.8" cy="542.3" r="4.3"/><circle cx="276.3" cy="529.0" r="4.3"/><circle cx="271.3" cy="515.7" r="4.3"/><circle cx="266.8" cy="502.2" r="4.3"/><circle cx="261.8" cy="488.2" r="4.3"/><circle cx="256.8" cy="475.2" r="4.3"/><circle cx="252.5" cy="461.9" r="4.3"/><circle cx="248.0" cy="448.8" r="4.3"/><circle cx="244.2" cy="435.0" r="4.3"/><circle cx="241.0" cy="421.3" r="4.3"/><circle cx="237.8" cy="407.5" r="4.3"/><circle cx="234.2" cy="392.9" r="4.3"/><circle cx="231.0" cy="379.0" r="4.3"/><circle cx="229.2" cy="365.3" r="4.3"/><circle cx="227.5" cy="351.5" r="4.3"/><circle cx="226.7" cy="337.3" r="4.3"/><circle cx="226.2" cy="323.5" r="4.3"/><circle cx="226.2" cy="310.0" r="4.3"/><circle cx="226.7" cy="296.0" r="4.3"/><circle cx="228.9" cy="281.8" r="4.3"/><circle cx="232.9" cy="267.7" r="4.3"/><circle cx="239.3" cy="254.3" r="4.3"/><circle cx="247.3" cy="243.1" r="4.3"/><circle cx="256.6" cy="232.9" r="4.3"/><circle cx="267.9" cy="223.9" r="4.3"/><circle cx="280.2" cy="217.7" r="4.3"/><circle cx="293.5" cy="213.2" r="4.3"/><circle cx="307.7" cy="210.0" r="4.3"/><circle cx="322.4" cy="208.4" r="4.3"/><circle cx="337.1" cy="208.4" r="4.3"/><circle cx="351.8" cy="209.7" r="4.3"/><circle cx="366.2" cy="211.6" r="4.3"/><circle cx="381.2" cy="213.2" r="4.3"/><circle cx="395.9" cy="215.8" r="4.3"/><circle cx="409.7" cy="219.6" r="4.3"/><circle cx="424.4" cy="223.1" r="4.3"/><circle cx="438.3" cy="227.6" r="4.3"/><circle cx="452.5" cy="231.9" r="4.3"/><circle cx="465.9" cy="236.4" r="4.3"/><circle cx="479.2" cy="241.8" r="4.3"/><circle cx="493.4" cy="246.3" r="4.3"/><circle cx="506.7" cy="251.6" r="4.3"/><circle cx="519.8" cy="257.8" r="4.3"/><circle cx="533.2" cy="263.1" r="4.3"/><circle cx="546.6" cy="267.7" r="4.3"/></g>
<g fill="#2f75b7"><circle cx="562.0" cy="274.6" r="4.2"/></g>
<path d="M558.9 264.8 L568.6 278.5 L557.1 286.1" fill="none" stroke="#2f75b7" stroke-width="9.4" stroke-linejoin="round" stroke-linecap="round" />
<g fill="#2f75b7"><circle cx="153.2" cy="363.9" r="4.3"/><circle cx="162.3" cy="375.7" r="4.3"/><circle cx="170.3" cy="387.4" r="4.3"/><circle cx="177.9" cy="400.2" r="4.3"/><circle cx="184.1" cy="412.5" r="4.3"/><circle cx="189.1" cy="425.0" r="4.3"/><circle cx="193.4" cy="438.0" r="4.3"/><circle cx="196.6" cy="451.4" r="4.3"/><circle cx="199.1" cy="465.1" r="4.3"/><circle cx="200.4" cy="478.9" r="4.3"/><circle cx="200.6" cy="492.7" r="4.3"/><circle cx="200.4" cy="507.2" r="4.3"/><circle cx="199.1" cy="520.7" r="4.3"/></g>
<path d="M184.8 531.3 L196.0 542.4 L206.5 529.5" fill="none" stroke="#2f75b7" stroke-width="9.4" stroke-linejoin="round" stroke-linecap="round" />
<g fill="#9bc94a"><circle cx="103.0" cy="425.6" r="4.3"/><circle cx="107.8" cy="439.0" r="4.3"/><circle cx="112.2" cy="452.1" r="4.3"/><circle cx="116.5" cy="464.6" r="4.3"/><circle cx="120.2" cy="477.2" r="4.3"/><circle cx="123.5" cy="492.2" r="4.3"/><circle cx="127.0" cy="507.2" r="4.3"/><circle cx="129.8" cy="522.0" r="4.3"/><circle cx="132.3" cy="536.5" r="4.3"/><circle cx="134.8" cy="551.0" r="4.3"/><circle cx="136.5" cy="565.3" r="4.3"/><circle cx="137.8" cy="579.9" r="4.3"/><circle cx="138.5" cy="594.1" r="4.3"/><circle cx="139.0" cy="610.8" r="4.3"/><circle cx="139.0" cy="626.0" r="4.3"/><circle cx="138.6" cy="640.5" r="4.3"/><circle cx="137.9" cy="654.9" r="4.3"/><circle cx="136.8" cy="669.3" r="4.3"/></g>
<g fill="#9bc94a"><circle cx="135.0" cy="683.5" r="4.3"/></g>
<path d="M122.0 686.0 L134.2 695.8 L143.6 681.0" fill="none" stroke="#9bc94a" stroke-width="9.2" stroke-linejoin="round" stroke-linecap="round" />
<g fill="#9bc94a"><circle cx="154.4" cy="700.0" r="4.3"/><circle cx="166.7" cy="692.5" r="4.3"/><circle cx="179.3" cy="684.6" r="4.3"/><circle cx="191.8" cy="677.0" r="4.3"/><circle cx="203.8" cy="668.1" r="4.3"/><circle cx="215.5" cy="659.8" r="4.3"/><circle cx="225.7" cy="651.4" r="4.3"/><circle cx="236.3" cy="643.1" r="4.3"/><circle cx="247.4" cy="633.9" r="4.3"/><circle cx="257.7" cy="624.5" r="4.3"/><circle cx="267.4" cy="613.9" r="4.3"/><circle cx="277.0" cy="604.4" r="4.3"/><circle cx="286.3" cy="594.9" r="4.3"/><circle cx="295.1" cy="584.9" r="4.3"/><circle cx="303.6" cy="574.1" r="4.3"/><circle cx="311.9" cy="564.1" r="4.3"/><circle cx="320.6" cy="551.6" r="4.3"/><circle cx="328.9" cy="538.3" r="4.3"/><circle cx="336.8" cy="525.3" r="4.3"/><circle cx="343.8" cy="512.9" r="4.3"/><circle cx="350.6" cy="500.6" r="4.3"/><circle cx="357.0" cy="487.5" r="4.3"/><circle cx="362.7" cy="474.4" r="4.3"/><circle cx="368.3" cy="461.1" r="4.3"/><circle cx="373.8" cy="447.3" r="4.3"/><circle cx="378.9" cy="433.2" r="4.3"/><circle cx="383.3" cy="420.0" r="4.3"/><circle cx="387.5" cy="405.2" r="4.3"/><circle cx="390.6" cy="390.8" r="4.3"/><circle cx="394.3" cy="375.6" r="4.3"/><circle cx="396.9" cy="361.9" r="4.3"/></g>
<g fill="#9bc94a"><circle cx="399.8" cy="347.3" r="4.3"/></g>
<path d="M387.5 339.3 L401.6 333.9 L407.4 349.8" fill="none" stroke="#9bc94a" stroke-width="9" stroke-linejoin="round" stroke-linecap="round" />
<g fill="#9bc94a"><circle cx="388.2" cy="431.5" r="2.5"/><circle cx="395.1" cy="427.5" r="2.5"/><circle cx="401.6" cy="421.7" r="2.5"/><circle cx="406.7" cy="415.2" r="2.5"/><circle cx="410.6" cy="407.6" r="2.5"/><circle cx="412.8" cy="399.3" r="2.5"/></g>
<path d="M405.9 396.1 L414.2 391.0 L419.3 399.3" fill="none" stroke="#9bc94a" stroke-width="4.7" stroke-linejoin="round" stroke-linecap="round" />
<g fill="#9bc94a"><circle cx="360.0" cy="488.0" r="2.5"/><circle cx="367.1" cy="489.7" r="2.5"/><circle cx="375.0" cy="489.8" r="2.5"/><circle cx="383.0" cy="489.2" r="2.5"/><circle cx="390.9" cy="486.2" r="2.5"/><circle cx="396.7" cy="480.6" r="2.5"/><circle cx="400.1" cy="473.4" r="2.5"/><circle cx="401.9" cy="465.3" r="2.5"/></g>
<path d="M396.1 460.2 L402.6 454.1 L409.8 461.7" fill="none" stroke="#9bc94a" stroke-width="4.7" stroke-linejoin="round" stroke-linecap="round" />
<g fill="#9bc94a"><circle cx="341.5" cy="541.2" r="3.3"/><circle cx="352.5" cy="540.7" r="3.3"/><circle cx="362.4" cy="538.5" r="3.3"/><circle cx="371.6" cy="534.7" r="3.3"/><circle cx="380.1" cy="529.1" r="3.3"/><circle cx="387.5" cy="521.7" r="3.3"/></g>
<path d="M383.5 512.0 L396.2 510.5 L396.2 523.9" fill="none" stroke="#9bc94a" stroke-width="6.5" stroke-linejoin="round" stroke-linecap="round" />
<g fill="#9c63ab"><circle cx="51.9" cy="448.1" r="4.3"/><circle cx="45.8" cy="461.4" r="4.3"/><circle cx="40.6" cy="474.6" r="4.3"/><circle cx="35.8" cy="488.2" r="4.3"/><circle cx="32.1" cy="501.5" r="4.3"/><circle cx="29.6" cy="515.2" r="4.3"/><circle cx="27.6" cy="529.8" r="4.3"/><circle cx="26.8" cy="544.5" r="4.3"/><circle cx="27.1" cy="559.6" r="4.3"/><circle cx="28.3" cy="574.6" r="4.3"/><circle cx="30.6" cy="589.1" r="4.3"/><circle cx="34.8" cy="604.0" r="4.3"/><circle cx="39.3" cy="618.1" r="4.3"/><circle cx="44.8" cy="631.1" r="4.3"/><circle cx="51.5" cy="644.7" r="4.3"/></g>
<path d="M46.7 653.5 L61.8 662.5 L68.3 649.2" fill="none" stroke="#9c63ab" stroke-width="8.8" stroke-linejoin="round" stroke-linecap="round" />
<g fill="#9c63ab"><circle cx="79.3" cy="674.8" r="4.5"/><circle cx="91.6" cy="682.9" r="4.5"/><circle cx="103.8" cy="690.6" r="4.5"/><circle cx="115.9" cy="697.6" r="4.5"/><circle cx="127.5" cy="704.8" r="4.5"/><circle cx="139.6" cy="711.5" r="4.5"/><circle cx="152.4" cy="718.0" r="4.5"/><circle cx="164.9" cy="725.7" r="4.5"/><circle cx="177.9" cy="732.1" r="4.5"/><circle cx="190.4" cy="737.6" r="4.5"/><circle cx="202.9" cy="743.7" r="4.5"/><circle cx="216.0" cy="750.1" r="4.5"/><circle cx="228.5" cy="755.1" r="4.5"/><circle cx="241.3" cy="760.4" r="4.5"/><circle cx="254.4" cy="765.4" r="4.5"/><circle cx="267.4" cy="769.6" r="4.5"/><circle cx="281.3" cy="774.3" r="4.5"/><circle cx="294.7" cy="777.9" r="4.5"/><circle cx="310.0" cy="781.3" r="4.5"/><circle cx="323.9" cy="784.3" r="4.5"/><circle cx="337.8" cy="786.8" r="4.5"/><circle cx="352.5" cy="788.5" r="4.5"/><circle cx="366.6" cy="789.2" r="4.5"/><circle cx="380.0" cy="788.8" r="4.5"/><circle cx="395.8" cy="787.1" r="4.5"/><circle cx="410.1" cy="785.1" r="4.5"/><circle cx="423.9" cy="782.1" r="4.5"/><circle cx="436.9" cy="777.6" r="4.5"/><circle cx="448.9" cy="771.8" r="4.5"/><circle cx="460.7" cy="765.0" r="4.5"/><circle cx="472.2" cy="757.5" r="4.5"/><circle cx="482.8" cy="749.3" r="4.5"/><circle cx="492.6" cy="740.0" r="4.5"/><circle cx="500.5" cy="726.9" r="4.5"/><circle cx="508.5" cy="714.2" r="4.5"/><circle cx="515.6" cy="702.5" r="4.5"/><circle cx="522.6" cy="689.3" r="4.5"/><circle cx="528.7" cy="676.1" r="4.5"/><circle cx="534.4" cy="661.1" r="4.5"/><circle cx="539.6" cy="647.0" r="4.5"/><circle cx="542.9" cy="632.8" r="4.5"/><circle cx="546.6" cy="618.7" r="4.5"/><circle cx="549.0" cy="604.6" r="4.5"/><circle cx="551.3" cy="591.5" r="4.5"/><circle cx="553.2" cy="577.3" r="4.5"/><circle cx="554.6" cy="562.3" r="4.5"/><circle cx="555.6" cy="547.2" r="4.5"/><circle cx="557.0" cy="531.7" r="4.5"/><circle cx="557.9" cy="517.6" r="4.5"/><circle cx="558.4" cy="502.6" r="4.5"/><circle cx="558.6" cy="489.4" r="4.5"/><circle cx="559.0" cy="475.3" r="4.5"/><circle cx="559.0" cy="459.9" r="4.5"/><circle cx="558.7" cy="445.8" r="4.5"/><circle cx="558.5" cy="430.7" r="4.5"/><circle cx="557.9" cy="416.6" r="4.5"/></g>
<path d="M543.6 405.6 L556.2 396.0 L566.4 411.4" fill="none" stroke="#9c63ab" stroke-width="8.2" stroke-linejoin="round" stroke-linecap="round" />
<g fill="#e53a2f"><circle cx="119.9" cy="396.4" r="4.3"/><circle cx="120.6" cy="410.7" r="4.3"/><circle cx="122.4" cy="425.1" r="4.3"/><circle cx="124.8" cy="439.2" r="4.3"/><circle cx="127.6" cy="453.2" r="4.3"/><circle cx="130.8" cy="466.9" r="4.3"/><circle cx="134.5" cy="480.7" r="4.3"/><circle cx="138.5" cy="493.9" r="4.3"/><circle cx="143.3" cy="507.2" r="4.3"/><circle cx="148.3" cy="520.2" r="4.3"/><circle cx="153.6" cy="532.8" r="4.3"/><circle cx="159.6" cy="544.5" r="4.3"/><circle cx="165.8" cy="557.3" r="4.3"/><circle cx="172.8" cy="569.0" r="4.3"/><circle cx="180.4" cy="580.4" r="4.3"/><circle cx="187.9" cy="592.4" r="4.3"/><circle cx="196.1" cy="603.0" r="4.3"/><circle cx="204.9" cy="613.9" r="4.3"/><circle cx="213.5" cy="625.0" r="4.3"/><circle cx="223.0" cy="635.6" r="4.3"/><circle cx="233.0" cy="644.5" r="4.3"/></g>
<g fill="#e53a2f"><circle cx="243.9" cy="656.0" r="4.3"/></g>
<path d="M236.7 659.7 L253.3 664.4 L255.4 649.2" fill="none" stroke="#e53a2f" stroke-width="9.4" stroke-linejoin="round" stroke-linecap="round" />
<g fill="#e53a2f"><circle cx="335.0" cy="677.0" r="4.3"/><circle cx="349.5" cy="679.6" r="4.3"/><circle cx="362.8" cy="680.8" r="4.3"/><circle cx="375.9" cy="681.3" r="4.3"/><circle cx="390.9" cy="681.3" r="4.3"/><circle cx="404.1" cy="680.8" r="4.3"/><circle cx="419.1" cy="679.9" r="4.3"/><circle cx="433.7" cy="678.5" r="4.3"/><circle cx="447.8" cy="676.6" r="4.3"/><circle cx="462.9" cy="673.8" r="4.3"/><circle cx="477.0" cy="671.0" r="4.3"/><circle cx="491.1" cy="667.7" r="4.3"/><circle cx="505.2" cy="663.9" r="4.3"/><circle cx="519.3" cy="658.7" r="4.3"/><circle cx="532.5" cy="653.1" r="4.3"/><circle cx="546.6" cy="647.0" r="4.3"/><circle cx="559.3" cy="640.8" r="4.3"/><circle cx="571.4" cy="633.2" r="4.3"/><circle cx="583.8" cy="625.0" r="4.3"/><circle cx="595.8" cy="617.0" r="4.3"/><circle cx="607.7" cy="608.4" r="4.3"/><circle cx="618.9" cy="599.1" r="4.3"/></g>
<g fill="#e53a2f"><circle cx="629.8" cy="589.4" r="4.6"/></g>
<path d="M621.6 576.6 Q632 581.5 639.4 579.4 Q639.6 590 633.4 600.4" fill="none" stroke="#e53a2f" stroke-width="9.4" stroke-linejoin="round" stroke-linecap="round"/></svg>
</body></html>
